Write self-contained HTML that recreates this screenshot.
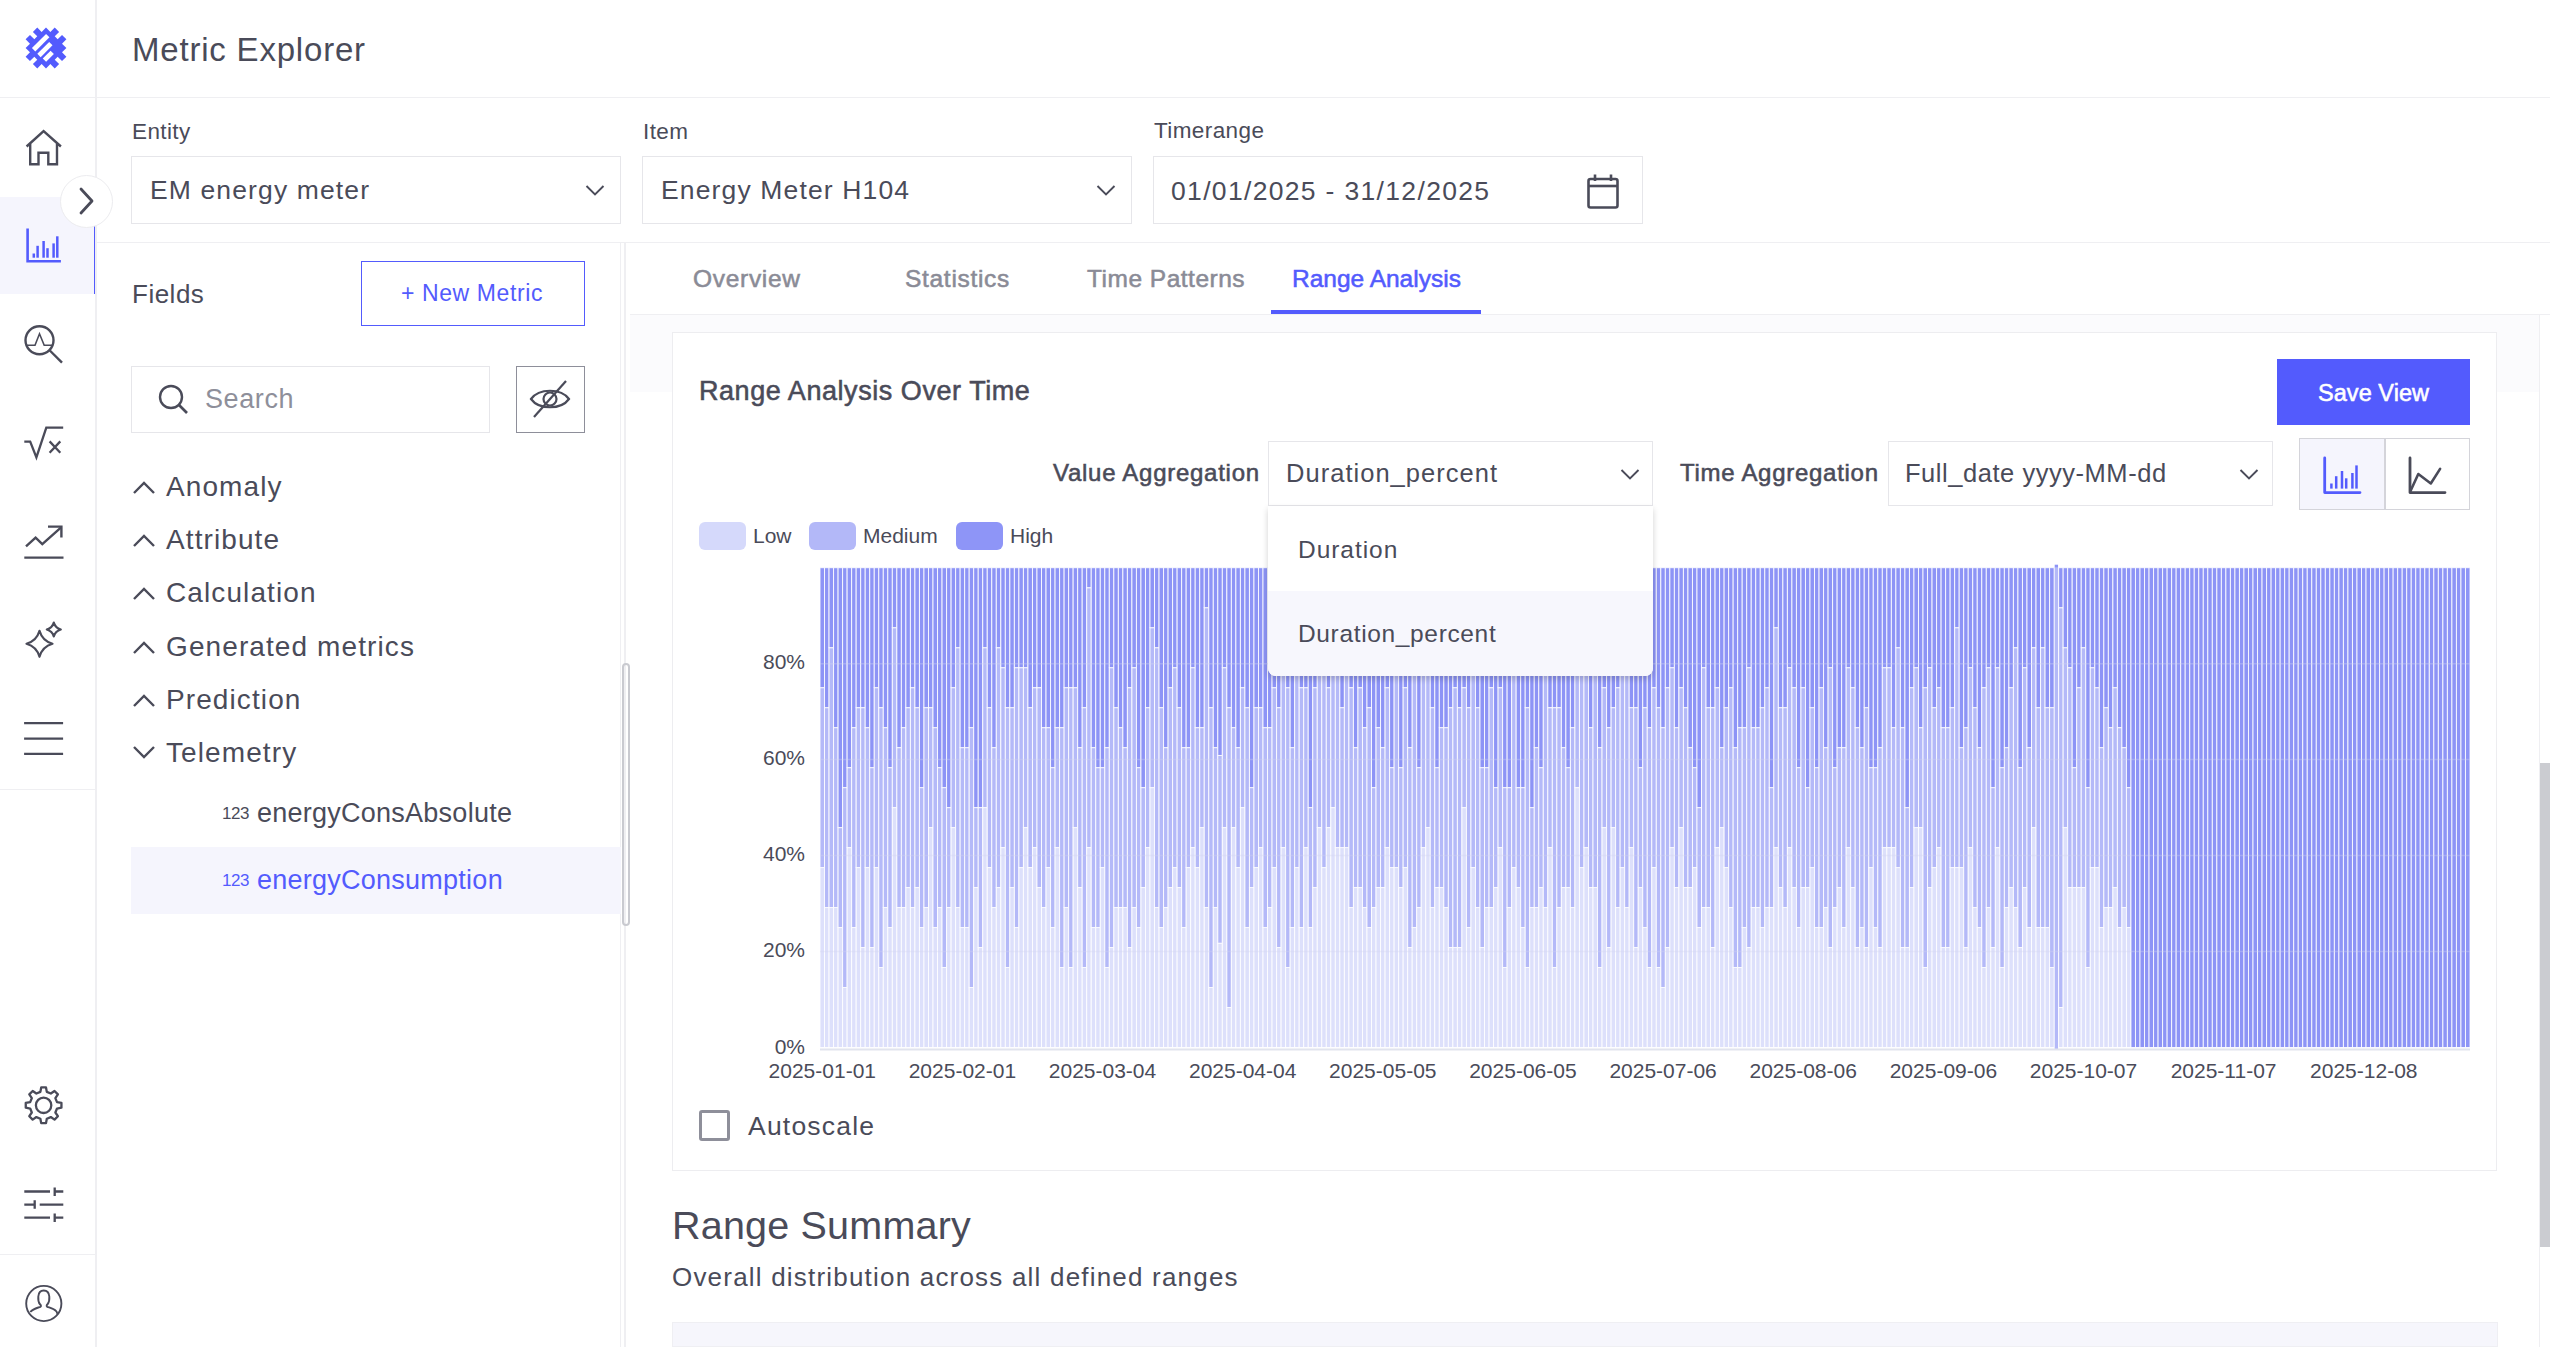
<!DOCTYPE html>
<html><head><meta charset="utf-8">
<style>
*{box-sizing:border-box;margin:0;padding:0}
html,body{width:2550px;height:1347px;overflow:hidden;background:#fff;font-family:"Liberation Sans",sans-serif;color:#4a4b59}
.a{position:absolute}
.t{position:absolute;white-space:nowrap;line-height:1}
.sb{-webkit-text-stroke:0.55px currentColor}
.ln{position:absolute;background:#efeff2}
.box{position:absolute;border:1.5px solid #e6e6ea;background:#fff}
svg{position:absolute;overflow:visible}
</style></head><body>
<!-- NAV -->
<div class="ln" style="left:95px;top:0;width:1.5px;height:1347px"></div>
<div class="ln" style="left:0;top:96.5px;width:2550px;height:1.5px"></div>
<div class="ln" style="left:0;top:788.5px;width:95px;height:1.5px"></div>
<div class="ln" style="left:0;top:1253.5px;width:95px;height:1.5px"></div>
<div class="a" style="left:0;top:197px;width:95px;height:97px;background:#f5f5fd"></div>
<div class="a" style="left:93.5px;top:197px;width:1.6px;height:97px;background:#535bfd"></div>
<svg style="left:0px;top:0px" width="95" height="97" viewBox="0 0 95 97"><g transform="translate(46 48) rotate(45) scale(1.03)"><path fill="#535bfd" d="M-8 -20 H-2 V-14 H2 V-20 H8 V-14 H14 V-8 H20 V-2 H14 V2 H20 V8 H14 V14 H8 V20 H2 V14 H-2 V20 H-8 V14 H-14 V8 H-20 V2 H-14 V-2 H-20 V-8 H-14 V-14 H-8 Z"/><rect x="-9.6" y="-9.7" width="4.6" height="19.4" fill="#fff"/><rect x="-1.95" y="-6.3" width="4.6" height="16.3" fill="#fff"/><rect x="4.95" y="-1.3" width="4.6" height="10.7" fill="#fff"/></g></svg>
<svg style="left:0px;top:0px" width="95" height="300" viewBox="0 0 95 300"><path d="M26.6 146.5 L43.6 131 L60.9 146.5 M30.2 143 V164.3 H38.5 V152.8 H48.3 V164.3 H57 V143" fill="none" stroke="#4a4b59" stroke-width="2.4" stroke-linejoin="miter"/></svg>
<svg style="left:0px;top:0px" width="95" height="300" viewBox="0 0 95 300"><path d="M27.6 228.6 V261.3 H60.9" fill="none" stroke="#535bfd" stroke-width="2.6"/><line x1="33.8" y1="257.7" x2="33.8" y2="253.5" stroke="#535bfd" stroke-width="2.5"/><line x1="37.6" y1="257.7" x2="37.6" y2="245.8" stroke="#535bfd" stroke-width="2.5"/><line x1="43.6" y1="257.7" x2="43.6" y2="241" stroke="#535bfd" stroke-width="2.5"/><line x1="47.5" y1="257.7" x2="47.5" y2="248.2" stroke="#535bfd" stroke-width="2.5"/><line x1="53.6" y1="257.7" x2="53.6" y2="243.4" stroke="#535bfd" stroke-width="2.5"/><line x1="57.3" y1="257.7" x2="57.3" y2="236.3" stroke="#535bfd" stroke-width="2.5"/></svg>
<svg style="left:0px;top:300px" width="95" height="100" viewBox="0 300 95 100"><circle cx="39.5" cy="340.3" r="14" fill="none" stroke="#4a4b59" stroke-width="2.4"/><line x1="49.8" y1="350.5" x2="62" y2="362.7" stroke="#4a4b59" stroke-width="2.4"/><path d="M26.5 345.3 H35 L39.5 333.8 L44.2 345.3 H52.5" fill="none" stroke="#4a4b59" stroke-width="1.6"/></svg>
<svg style="left:0px;top:400px" width="95" height="100" viewBox="0 400 95 100"><path d="M24.3 441.6 H30.2 L36.4 457.4 L46.3 427.7 H63.2" fill="none" stroke="#4a4b59" stroke-width="2.3"/><path d="M49.6 441.4 L60.3 452.7 M60.3 441.4 L49.6 452.7" stroke="#4a4b59" stroke-width="2.3"/></svg>
<svg style="left:0px;top:500px" width="95" height="100" viewBox="0 500 95 100"><path d="M26 546.3 L35.6 537.6 L42.3 544.1 L61.4 527.2" fill="none" stroke="#4a4b59" stroke-width="2.4"/><path d="M48 526.6 H61.4 V537.6" fill="none" stroke="#4a4b59" stroke-width="2.4"/><line x1="24.3" y1="557.6" x2="63.5" y2="557.6" stroke="#4a4b59" stroke-width="2.4"/></svg>
<svg style="left:0px;top:600px" width="95" height="100" viewBox="0 600 95 100"><path d="M39.5 630.8 Q42.36 640.9399999999999 52.5 643.8 Q42.36 646.66 39.5 656.8 Q36.64 646.66 26.5 643.8 Q36.64 640.9399999999999 39.5 630.8 Z M53.8 622.5 Q55.339999999999996 627.96 60.8 629.5 Q55.339999999999996 631.04 53.8 636.5 Q52.26 631.04 46.8 629.5 Q52.26 627.96 53.8 622.5 Z" fill="none" stroke="#4a4b59" stroke-width="2.2" stroke-linejoin="round"/></svg>
<svg style="left:0px;top:700px" width="95" height="80" viewBox="0 700 95 80"><line x1="24.1" y1="723.2" x2="63.1" y2="723.2" stroke="#4a4b59" stroke-width="2.3"/><line x1="24.1" y1="738.7" x2="63.1" y2="738.7" stroke="#4a4b59" stroke-width="2.3"/><line x1="24.1" y1="753.9" x2="63.1" y2="753.9" stroke="#4a4b59" stroke-width="2.3"/></svg>
<svg style="left:0px;top:1075px" width="95" height="60" viewBox="0 1075 95 60"><path d="M41.20 1087.46 L46.00 1087.46 L46.82 1091.88 L50.81 1093.53 L54.52 1090.99 L57.91 1094.38 L55.37 1098.09 L57.02 1102.08 L61.44 1102.90 L61.44 1107.70 L57.02 1108.52 L55.37 1112.51 L57.91 1116.22 L54.52 1119.61 L50.81 1117.07 L46.82 1118.72 L46.00 1123.14 L41.20 1123.14 L40.38 1118.72 L36.39 1117.07 L32.68 1119.61 L29.29 1116.22 L31.83 1112.51 L30.18 1108.52 L25.76 1107.70 L25.76 1102.90 L30.18 1102.08 L31.83 1098.09 L29.29 1094.38 L32.68 1090.99 L36.39 1093.53 L40.38 1091.88 Z" fill="none" stroke="#4a4b59" stroke-width="2.3" stroke-linejoin="round"/><circle cx="43.6" cy="1105.3" r="7.7" fill="none" stroke="#4a4b59" stroke-width="2.3"/></svg>
<svg style="left:0px;top:1180px" width="95" height="50" viewBox="0 1180 95 50"><path d="M24.3 1191.5 H50 M54.7 1191.5 H63.3 M54.7 1187.4 V1195.9 M24.3 1204.6 H34.7 M39.7 1204.6 H63.3 M34.7 1200.3 V1208.8 M24.3 1217.7 H50 M54.7 1217.7 H63.3 M54.7 1213.4 V1221.9" fill="none" stroke="#4a4b59" stroke-width="2.3"/></svg>
<svg style="left:0px;top:1270px" width="95" height="70" viewBox="0 1270 95 70"><circle cx="43.8" cy="1303.5" r="17.6" fill="none" stroke="#4a4b59" stroke-width="1.9"/><path d="M30.3 1312 C33 1308.5 37 1308 40.5 1306.8 C41.5 1306 40.8 1305 40 1304.3 C38.5 1302.5 38 1300 38.3 1296.5 C38.6 1292.5 41 1290.5 43.7 1290.5 C46.5 1290.5 49 1292.5 49.3 1296.5 C49.6 1300 49 1302.5 47.5 1304.3 C46.7 1305 46.2 1306 47.2 1306.8 C50.7 1308 54 1308.5 56.5 1311.5 L57.5 1314" fill="none" stroke="#4a4b59" stroke-width="1.9"/></svg>
<!-- HEADER -->
<div class="t" style="left:132px;top:33px;font-size:33px;letter-spacing:0.8px">Metric Explorer</div>
<!-- FILTER ROW -->
<div class="ln" style="left:96px;top:241.5px;width:2454px;height:1.5px"></div>
<div class="t" style="left:132px;top:121px;font-size:22.5px;letter-spacing:0.4px">Entity</div>
<div class="t" style="left:643px;top:121px;font-size:22.5px;letter-spacing:0.4px">Item</div>
<div class="t" style="left:1154px;top:120px;font-size:22.5px;letter-spacing:0.4px">Timerange</div>
<div class="box" style="left:131px;top:156px;width:490px;height:68px"></div>
<div class="box" style="left:642px;top:156px;width:490px;height:68px"></div>
<div class="box" style="left:1153px;top:156px;width:490px;height:68px"></div>
<div class="t" style="left:150px;top:177px;font-size:26.5px;letter-spacing:1.13px">EM energy meter</div>
<div class="t" style="left:661px;top:177px;font-size:26.5px;letter-spacing:1.14px">Energy Meter H104</div>
<div class="t" style="left:1171px;top:178px;font-size:26.5px;letter-spacing:1.33px">01/01/2025 - 31/12/2025</div>
<svg style="left:584px;top:183px" width="22" height="16" viewBox="0 0 22 16"><path d="M2.5 3 L11 11.5 L19.5 3" fill="none" stroke="#4a4b59" stroke-width="1.9"/></svg>
<svg style="left:1095px;top:183px" width="22" height="16" viewBox="0 0 22 16"><path d="M2.5 3 L11 11.5 L19.5 3" fill="none" stroke="#4a4b59" stroke-width="1.9"/></svg>
<svg style="left:1585px;top:173px" width="36" height="38" viewBox="0 0 36 38"><rect x="3.5" y="6" width="29" height="28.5" rx="2" fill="none" stroke="#4a4b59" stroke-width="2.6"/><line x1="3.5" y1="13" x2="32.5" y2="13" stroke="#4a4b59" stroke-width="2.6"/><line x1="10" y1="1.5" x2="10" y2="8" stroke="#4a4b59" stroke-width="2.6"/><line x1="26" y1="1.5" x2="26" y2="8" stroke="#4a4b59" stroke-width="2.6"/></svg>
<!-- LEFT PANEL -->
<div class="ln" style="left:619.8px;top:243px;width:1.5px;height:1104px"></div>
<div class="ln" style="left:624.3px;top:243px;width:1.5px;height:1104px"></div>
<div class="t" style="left:132px;top:281px;font-size:26px;letter-spacing:0.5px">Fields</div>
<div class="a" style="left:361px;top:261px;width:224px;height:65px;border:1.5px solid #535bfd"></div>
<div class="t" style="left:401px;top:282px;font-size:23px;letter-spacing:0.6px;color:#535bfd">+ New Metric</div>
<div class="box" style="left:131px;top:366px;width:359px;height:67px"></div>
<svg style="left:156px;top:382px" width="34" height="34" viewBox="0 0 34 34"><circle cx="15" cy="15" r="11" fill="none" stroke="#4a4b59" stroke-width="2.4"/><line x1="23" y1="23" x2="31" y2="31" stroke="#4a4b59" stroke-width="2.6"/></svg>
<div class="t" style="left:205px;top:386px;font-size:27px;letter-spacing:0.6px;color:#8e8f9a">Search</div>
<div class="a" style="left:516px;top:366px;width:69px;height:67px;border:1.5px solid #8e8f9a"></div>
<svg style="left:526px;top:376px" width="48" height="46" viewBox="0 0 48 46"><path d="M5 23 C13 12 35 12 43 23 C35 34 13 34 5 23 Z" fill="none" stroke="#4a4b59" stroke-width="2.2"/><circle cx="24" cy="23" r="6.5" fill="none" stroke="#4a4b59" stroke-width="2.2"/><line x1="8" y1="41" x2="40" y2="5" stroke="#4a4b59" stroke-width="2.2"/></svg>
<div class="a" style="left:131px;top:847px;width:490px;height:67px;background:#f5f5fd"></div>
<svg style="left:0;top:0" width="200" height="1000" viewBox="0 0 200 1000"><path d="M134 493 L144 483 L154 493" fill="none" stroke="#4a4b59" stroke-width="2.4"/></svg>
<div class="t" style="left:166px;top:473px;font-size:28px;letter-spacing:1.1px">Anomaly</div>
<svg style="left:0;top:0" width="200" height="1000" viewBox="0 0 200 1000"><path d="M134 546 L144 536 L154 546" fill="none" stroke="#4a4b59" stroke-width="2.4"/></svg>
<div class="t" style="left:166px;top:526px;font-size:28px;letter-spacing:1.1px">Attribute</div>
<svg style="left:0;top:0" width="200" height="1000" viewBox="0 0 200 1000"><path d="M134 599 L144 589 L154 599" fill="none" stroke="#4a4b59" stroke-width="2.4"/></svg>
<div class="t" style="left:166px;top:579px;font-size:28px;letter-spacing:1.1px">Calculation</div>
<svg style="left:0;top:0" width="200" height="1000" viewBox="0 0 200 1000"><path d="M134 653 L144 643 L154 653" fill="none" stroke="#4a4b59" stroke-width="2.4"/></svg>
<div class="t" style="left:166px;top:633px;font-size:28px;letter-spacing:1.1px">Generated metrics</div>
<svg style="left:0;top:0" width="200" height="1000" viewBox="0 0 200 1000"><path d="M134 706 L144 696 L154 706" fill="none" stroke="#4a4b59" stroke-width="2.4"/></svg>
<div class="t" style="left:166px;top:686px;font-size:28px;letter-spacing:1.1px">Prediction</div>
<svg style="left:0;top:0" width="200" height="1000" viewBox="0 0 200 1000"><path d="M134 747 L144 757 L154 747" fill="none" stroke="#4a4b59" stroke-width="2.4"/></svg>
<div class="t" style="left:166px;top:739px;font-size:28px;letter-spacing:1.1px">Telemetry</div>
<div class="t" style="left:222px;top:805px;font-size:17px;letter-spacing:-0.5px;color:#4a4b59">123</div>
<div class="t" style="left:257px;top:800px;font-size:27px;letter-spacing:0.25px;color:#4a4b59">energyConsAbsolute</div>
<div class="t" style="left:222px;top:872px;font-size:17px;letter-spacing:-0.5px;color:#535bfd">123</div>
<div class="t" style="left:257px;top:867px;font-size:27px;letter-spacing:0.25px;color:#535bfd">energyConsumption</div>
<!-- MAIN -->
<div class="ln" style="left:630px;top:313.5px;width:1920px;height:1.5px"></div>
<div class="a" style="left:630px;top:315px;width:1909px;height:77px;background:#fbfbfd"></div>
<div class="a" style="left:621.5px;top:663px;width:8px;height:263px;border:2px solid #c9cad0;border-radius:4px"></div>
<div class="ln" style="left:2538.5px;top:315px;width:1.5px;height:1032px"></div>
<div class="a" style="left:2540px;top:763px;width:10px;height:484px;background:#cbccd1"></div>
<div class="t sb" style="left:693px;top:267px;font-size:24.5px;letter-spacing:0.7px;color:#8a8b96">Overview</div>
<div class="t sb" style="left:905px;top:267px;font-size:24.5px;letter-spacing:0.7px;color:#8a8b96">Statistics</div>
<div class="t sb" style="left:1087px;top:267px;font-size:24.5px;letter-spacing:0.5px;color:#8a8b96">Time Patterns</div>
<div class="t sb" style="left:1292px;top:267px;font-size:24.5px;letter-spacing:0px;color:#535bfd">Range Analysis</div>
<div class="a" style="left:1271px;top:310px;width:210px;height:4px;background:#535bfd"></div>
<!-- CARD -->
<div class="a" style="left:672px;top:332px;width:1825px;height:839px;background:#fff;border:1.5px solid #ededf0"></div>
<div class="t sb" style="left:699px;top:378px;font-size:27px;letter-spacing:0.55px">Range Analysis Over Time</div>
<div class="a" style="left:2277px;top:359px;width:193px;height:66px;background:#535bfd"></div>
<div class="t sb" style="left:2318px;top:382px;font-size:23.5px;letter-spacing:0.05px;color:#fff">Save View</div>
<div class="t sb" style="left:1053px;top:461px;font-size:24px;letter-spacing:0.73px">Value Aggregation</div>
<div class="box" style="left:1268px;top:441px;width:385px;height:65px"></div>
<div class="t" style="left:1286px;top:461px;font-size:25.5px;letter-spacing:1.03px">Duration_percent</div>
<svg style="left:1619px;top:467px" width="22" height="16" viewBox="0 0 22 16"><path d="M2.5 3 L11 11.5 L19.5 3" fill="none" stroke="#4a4b59" stroke-width="1.9"/></svg>
<div class="t sb" style="left:1680px;top:461px;font-size:24px;letter-spacing:0.72px">Time Aggregation</div>
<div class="box" style="left:1888px;top:441px;width:385px;height:65px"></div>
<div class="t" style="left:1905px;top:461px;font-size:25.5px;letter-spacing:0.54px">Full_date yyyy-MM-dd</div>
<svg style="left:2238px;top:467px" width="22" height="16" viewBox="0 0 22 16"><path d="M2.5 3 L11 11.5 L19.5 3" fill="none" stroke="#4a4b59" stroke-width="1.9"/></svg>
<div class="a" style="left:2299px;top:438px;width:171px;height:72px;border:1.5px solid #d4d4da"></div>
<div class="a" style="left:2300px;top:439px;width:84px;height:70px;background:#f5f5fd"></div>
<div class="ln" style="left:2384px;top:439px;width:1.5px;height:70px;background:#d4d4da"></div>
<svg style="left:0;top:0" width="2550" height="600" viewBox="0 0 2550 600"><path d="M2324.7 458 V492.6 H2360" fill="none" stroke="#535bfd" stroke-width="2.8" stroke-linecap="round" stroke-linejoin="round"/><line x1="2331.4" y1="488.6" x2="2331.4" y2="483.5" stroke="#535bfd" stroke-width="2.5"/><line x1="2336.2" y1="488.6" x2="2336.2" y2="476.2" stroke="#535bfd" stroke-width="2.5"/><line x1="2342" y1="488.6" x2="2342" y2="471" stroke="#535bfd" stroke-width="2.5"/><line x1="2346.2" y1="488.6" x2="2346.2" y2="478.3" stroke="#535bfd" stroke-width="2.5"/><line x1="2352.4" y1="488.6" x2="2352.4" y2="473" stroke="#535bfd" stroke-width="2.5"/><line x1="2356.5" y1="488.6" x2="2356.5" y2="465.4" stroke="#535bfd" stroke-width="2.5"/></svg>
<svg style="left:0;top:0" width="2550" height="600" viewBox="0 0 2550 600"><path d="M2410 458 V492.6 H2445" fill="none" stroke="#4a4b59" stroke-width="2.8" stroke-linecap="round" stroke-linejoin="round"/><path d="M2410.5 491 L2418.3 474 L2430.8 483.5 L2440.1 468.9" fill="none" stroke="#4a4b59" stroke-width="2.6" stroke-linecap="round" stroke-linejoin="round"/></svg>
<!-- LEGEND -->
<div class="a" style="left:699px;top:522px;width:47px;height:28px;border-radius:6px;background:#d5d9fb"></div>
<div class="t" style="left:753px;top:525px;font-size:21px;color:#4a4b59">Low</div>
<div class="a" style="left:809px;top:522px;width:47px;height:28px;border-radius:6px;background:#b3b8f8"></div>
<div class="t" style="left:863px;top:525px;font-size:21px;color:#4a4b59">Medium</div>
<div class="a" style="left:956px;top:522px;width:47px;height:28px;border-radius:6px;background:#8e95f7"></div>
<div class="t" style="left:1010px;top:525px;font-size:21px;color:#4a4b59">High</div>
<svg style="left:0;top:0" width="2550" height="1347" viewBox="0 0 2550 1347" font-family="Liberation Sans"><text x="805" y="1053.5" text-anchor="end" font-size="21" fill="#4a4b59">0%</text><text x="805" y="957.3" text-anchor="end" font-size="21" fill="#4a4b59">20%</text><text x="805" y="861.1" text-anchor="end" font-size="21" fill="#4a4b59">40%</text><text x="805" y="764.9" text-anchor="end" font-size="21" fill="#4a4b59">60%</text><text x="805" y="668.7" text-anchor="end" font-size="21" fill="#4a4b59">80%</text><g stroke="#fff" stroke-width="1" stroke-opacity="0.85"><rect x="820.00" y="867.58" width="4.52" height="179.92" fill="#dde0fb"/><rect x="820.00" y="687.65" width="4.52" height="179.92" fill="#b4b9f8"/><rect x="820.00" y="567.70" width="4.52" height="119.95" fill="#8d94f6"/><rect x="824.52" y="907.56" width="4.52" height="139.94" fill="#dde0fb"/><rect x="824.52" y="707.64" width="4.52" height="199.92" fill="#b4b9f8"/><rect x="824.52" y="567.70" width="4.52" height="139.94" fill="#8d94f6"/><rect x="829.04" y="907.56" width="4.52" height="139.94" fill="#dde0fb"/><rect x="829.04" y="647.67" width="4.52" height="259.89" fill="#b4b9f8"/><rect x="829.04" y="567.70" width="4.52" height="79.97" fill="#8d94f6"/><rect x="833.56" y="907.56" width="4.52" height="139.94" fill="#dde0fb"/><rect x="833.56" y="727.63" width="4.52" height="179.92" fill="#b4b9f8"/><rect x="833.56" y="567.70" width="4.52" height="159.93" fill="#8d94f6"/><rect x="838.08" y="927.55" width="4.52" height="119.95" fill="#dde0fb"/><rect x="838.08" y="827.59" width="4.52" height="99.96" fill="#b4b9f8"/><rect x="838.08" y="567.70" width="4.52" height="259.89" fill="#8d94f6"/><rect x="842.60" y="987.52" width="4.52" height="59.98" fill="#dde0fb"/><rect x="842.60" y="787.61" width="4.52" height="199.92" fill="#b4b9f8"/><rect x="842.60" y="567.70" width="4.52" height="219.91" fill="#8d94f6"/><rect x="847.12" y="847.58" width="4.52" height="199.92" fill="#dde0fb"/><rect x="847.12" y="767.62" width="4.52" height="79.97" fill="#b4b9f8"/><rect x="847.12" y="567.70" width="4.52" height="199.92" fill="#8d94f6"/><rect x="851.64" y="927.55" width="4.52" height="119.95" fill="#dde0fb"/><rect x="851.64" y="727.63" width="4.52" height="199.92" fill="#b4b9f8"/><rect x="851.64" y="567.70" width="4.52" height="159.93" fill="#8d94f6"/><rect x="856.16" y="867.58" width="4.52" height="179.92" fill="#dde0fb"/><rect x="856.16" y="707.64" width="4.52" height="159.93" fill="#b4b9f8"/><rect x="856.16" y="567.70" width="4.52" height="139.94" fill="#8d94f6"/><rect x="860.68" y="947.54" width="4.52" height="99.96" fill="#dde0fb"/><rect x="860.68" y="707.64" width="4.52" height="239.90" fill="#b4b9f8"/><rect x="860.68" y="567.70" width="4.52" height="139.94" fill="#8d94f6"/><rect x="865.21" y="867.58" width="4.52" height="179.92" fill="#dde0fb"/><rect x="865.21" y="727.63" width="4.52" height="139.94" fill="#b4b9f8"/><rect x="865.21" y="567.70" width="4.52" height="159.93" fill="#8d94f6"/><rect x="869.73" y="947.54" width="4.52" height="99.96" fill="#dde0fb"/><rect x="869.73" y="767.62" width="4.52" height="179.92" fill="#b4b9f8"/><rect x="869.73" y="567.70" width="4.52" height="199.92" fill="#8d94f6"/><rect x="874.25" y="867.58" width="4.52" height="179.92" fill="#dde0fb"/><rect x="874.25" y="687.65" width="4.52" height="179.92" fill="#b4b9f8"/><rect x="874.25" y="567.70" width="4.52" height="119.95" fill="#8d94f6"/><rect x="878.77" y="967.53" width="4.52" height="79.97" fill="#dde0fb"/><rect x="878.77" y="707.64" width="4.52" height="259.89" fill="#b4b9f8"/><rect x="878.77" y="567.70" width="4.52" height="139.94" fill="#8d94f6"/><rect x="883.29" y="907.56" width="4.52" height="139.94" fill="#dde0fb"/><rect x="883.29" y="727.63" width="4.52" height="179.92" fill="#b4b9f8"/><rect x="883.29" y="567.70" width="4.52" height="159.93" fill="#8d94f6"/><rect x="887.81" y="927.55" width="4.52" height="119.95" fill="#dde0fb"/><rect x="887.81" y="767.62" width="4.52" height="159.93" fill="#b4b9f8"/><rect x="887.81" y="567.70" width="4.52" height="199.92" fill="#8d94f6"/><rect x="892.33" y="807.60" width="4.52" height="239.90" fill="#dde0fb"/><rect x="892.33" y="627.67" width="4.52" height="179.93" fill="#b4b9f8"/><rect x="892.33" y="567.70" width="4.52" height="59.97" fill="#8d94f6"/><rect x="896.85" y="907.56" width="4.52" height="139.94" fill="#dde0fb"/><rect x="896.85" y="747.62" width="4.52" height="159.93" fill="#b4b9f8"/><rect x="896.85" y="567.70" width="4.52" height="179.92" fill="#8d94f6"/><rect x="901.37" y="907.56" width="4.52" height="139.94" fill="#dde0fb"/><rect x="901.37" y="727.63" width="4.52" height="179.92" fill="#b4b9f8"/><rect x="901.37" y="567.70" width="4.52" height="159.93" fill="#8d94f6"/><rect x="905.89" y="887.57" width="4.52" height="159.93" fill="#dde0fb"/><rect x="905.89" y="707.64" width="4.52" height="179.93" fill="#b4b9f8"/><rect x="905.89" y="567.70" width="4.52" height="139.94" fill="#8d94f6"/><rect x="910.41" y="907.56" width="4.52" height="139.94" fill="#dde0fb"/><rect x="910.41" y="687.65" width="4.52" height="219.91" fill="#b4b9f8"/><rect x="910.41" y="567.70" width="4.52" height="119.95" fill="#8d94f6"/><rect x="914.93" y="887.57" width="4.52" height="159.93" fill="#dde0fb"/><rect x="914.93" y="707.64" width="4.52" height="179.93" fill="#b4b9f8"/><rect x="914.93" y="567.70" width="4.52" height="139.94" fill="#8d94f6"/><rect x="919.45" y="927.55" width="4.52" height="119.95" fill="#dde0fb"/><rect x="919.45" y="787.61" width="4.52" height="139.94" fill="#b4b9f8"/><rect x="919.45" y="567.70" width="4.52" height="219.91" fill="#8d94f6"/><rect x="923.97" y="907.56" width="4.52" height="139.94" fill="#dde0fb"/><rect x="923.97" y="707.64" width="4.52" height="199.92" fill="#b4b9f8"/><rect x="923.97" y="567.70" width="4.52" height="139.94" fill="#8d94f6"/><rect x="928.49" y="827.59" width="4.52" height="219.91" fill="#dde0fb"/><rect x="928.49" y="707.64" width="4.52" height="119.95" fill="#b4b9f8"/><rect x="928.49" y="567.70" width="4.52" height="139.94" fill="#8d94f6"/><rect x="933.01" y="927.55" width="4.52" height="119.95" fill="#dde0fb"/><rect x="933.01" y="727.63" width="4.52" height="199.92" fill="#b4b9f8"/><rect x="933.01" y="567.70" width="4.52" height="159.93" fill="#8d94f6"/><rect x="937.53" y="907.56" width="4.52" height="139.94" fill="#dde0fb"/><rect x="937.53" y="767.62" width="4.52" height="139.94" fill="#b4b9f8"/><rect x="937.53" y="567.70" width="4.52" height="199.92" fill="#8d94f6"/><rect x="942.05" y="967.53" width="4.52" height="79.97" fill="#dde0fb"/><rect x="942.05" y="787.61" width="4.52" height="179.92" fill="#b4b9f8"/><rect x="942.05" y="567.70" width="4.52" height="219.91" fill="#8d94f6"/><rect x="946.58" y="907.56" width="4.52" height="139.94" fill="#dde0fb"/><rect x="946.58" y="807.60" width="4.52" height="99.96" fill="#b4b9f8"/><rect x="946.58" y="567.70" width="4.52" height="239.90" fill="#8d94f6"/><rect x="951.10" y="827.59" width="4.52" height="219.91" fill="#dde0fb"/><rect x="951.10" y="687.65" width="4.52" height="139.94" fill="#b4b9f8"/><rect x="951.10" y="567.70" width="4.52" height="119.95" fill="#8d94f6"/><rect x="955.62" y="907.56" width="4.52" height="139.94" fill="#dde0fb"/><rect x="955.62" y="647.67" width="4.52" height="259.89" fill="#b4b9f8"/><rect x="955.62" y="567.70" width="4.52" height="79.97" fill="#8d94f6"/><rect x="960.14" y="927.55" width="4.52" height="119.95" fill="#dde0fb"/><rect x="960.14" y="747.62" width="4.52" height="179.92" fill="#b4b9f8"/><rect x="960.14" y="567.70" width="4.52" height="179.92" fill="#8d94f6"/><rect x="964.66" y="927.55" width="4.52" height="119.95" fill="#dde0fb"/><rect x="964.66" y="747.62" width="4.52" height="179.92" fill="#b4b9f8"/><rect x="964.66" y="567.70" width="4.52" height="179.92" fill="#8d94f6"/><rect x="969.18" y="987.52" width="4.52" height="59.98" fill="#dde0fb"/><rect x="969.18" y="727.63" width="4.52" height="259.89" fill="#b4b9f8"/><rect x="969.18" y="567.70" width="4.52" height="159.93" fill="#8d94f6"/><rect x="973.70" y="887.57" width="4.52" height="159.93" fill="#dde0fb"/><rect x="973.70" y="807.60" width="4.52" height="79.97" fill="#b4b9f8"/><rect x="973.70" y="567.70" width="4.52" height="239.90" fill="#8d94f6"/><rect x="978.22" y="947.54" width="4.52" height="99.96" fill="#dde0fb"/><rect x="978.22" y="807.60" width="4.52" height="139.94" fill="#b4b9f8"/><rect x="978.22" y="567.70" width="4.52" height="239.90" fill="#8d94f6"/><rect x="982.74" y="807.60" width="4.52" height="239.90" fill="#dde0fb"/><rect x="982.74" y="647.67" width="4.52" height="159.93" fill="#b4b9f8"/><rect x="982.74" y="567.70" width="4.52" height="79.97" fill="#8d94f6"/><rect x="987.26" y="867.58" width="4.52" height="179.92" fill="#dde0fb"/><rect x="987.26" y="707.64" width="4.52" height="159.93" fill="#b4b9f8"/><rect x="987.26" y="567.70" width="4.52" height="139.94" fill="#8d94f6"/><rect x="991.78" y="907.56" width="4.52" height="139.94" fill="#dde0fb"/><rect x="991.78" y="747.62" width="4.52" height="159.93" fill="#b4b9f8"/><rect x="991.78" y="567.70" width="4.52" height="179.92" fill="#8d94f6"/><rect x="996.30" y="887.57" width="4.52" height="159.93" fill="#dde0fb"/><rect x="996.30" y="647.67" width="4.52" height="239.90" fill="#b4b9f8"/><rect x="996.30" y="567.70" width="4.52" height="79.97" fill="#8d94f6"/><rect x="1000.82" y="847.58" width="4.52" height="199.92" fill="#dde0fb"/><rect x="1000.82" y="667.66" width="4.52" height="179.93" fill="#b4b9f8"/><rect x="1000.82" y="567.70" width="4.52" height="99.96" fill="#8d94f6"/><rect x="1005.34" y="967.53" width="4.52" height="79.97" fill="#dde0fb"/><rect x="1005.34" y="707.64" width="4.52" height="259.89" fill="#b4b9f8"/><rect x="1005.34" y="567.70" width="4.52" height="139.94" fill="#8d94f6"/><rect x="1009.86" y="887.57" width="4.52" height="159.93" fill="#dde0fb"/><rect x="1009.86" y="707.64" width="4.52" height="179.93" fill="#b4b9f8"/><rect x="1009.86" y="567.70" width="4.52" height="139.94" fill="#8d94f6"/><rect x="1014.38" y="927.55" width="4.52" height="119.95" fill="#dde0fb"/><rect x="1014.38" y="667.66" width="4.52" height="259.89" fill="#b4b9f8"/><rect x="1014.38" y="567.70" width="4.52" height="99.96" fill="#8d94f6"/><rect x="1018.90" y="867.58" width="4.52" height="179.92" fill="#dde0fb"/><rect x="1018.90" y="667.66" width="4.52" height="199.92" fill="#b4b9f8"/><rect x="1018.90" y="567.70" width="4.52" height="99.96" fill="#8d94f6"/><rect x="1023.42" y="827.59" width="4.52" height="219.91" fill="#dde0fb"/><rect x="1023.42" y="667.66" width="4.52" height="159.93" fill="#b4b9f8"/><rect x="1023.42" y="567.70" width="4.52" height="99.96" fill="#8d94f6"/><rect x="1027.95" y="867.58" width="4.52" height="179.92" fill="#dde0fb"/><rect x="1027.95" y="707.64" width="4.52" height="159.93" fill="#b4b9f8"/><rect x="1027.95" y="567.70" width="4.52" height="139.94" fill="#8d94f6"/><rect x="1032.47" y="847.58" width="4.52" height="199.92" fill="#dde0fb"/><rect x="1032.47" y="687.65" width="4.52" height="159.93" fill="#b4b9f8"/><rect x="1032.47" y="567.70" width="4.52" height="119.95" fill="#8d94f6"/><rect x="1036.99" y="887.57" width="4.52" height="159.93" fill="#dde0fb"/><rect x="1036.99" y="687.65" width="4.52" height="199.92" fill="#b4b9f8"/><rect x="1036.99" y="567.70" width="4.52" height="119.95" fill="#8d94f6"/><rect x="1041.51" y="907.56" width="4.52" height="139.94" fill="#dde0fb"/><rect x="1041.51" y="727.63" width="4.52" height="179.92" fill="#b4b9f8"/><rect x="1041.51" y="567.70" width="4.52" height="159.93" fill="#8d94f6"/><rect x="1046.03" y="867.58" width="4.52" height="179.92" fill="#dde0fb"/><rect x="1046.03" y="727.63" width="4.52" height="139.94" fill="#b4b9f8"/><rect x="1046.03" y="567.70" width="4.52" height="159.93" fill="#8d94f6"/><rect x="1050.55" y="927.55" width="4.52" height="119.95" fill="#dde0fb"/><rect x="1050.55" y="767.62" width="4.52" height="159.93" fill="#b4b9f8"/><rect x="1050.55" y="567.70" width="4.52" height="199.92" fill="#8d94f6"/><rect x="1055.07" y="847.58" width="4.52" height="199.92" fill="#dde0fb"/><rect x="1055.07" y="727.63" width="4.52" height="119.95" fill="#b4b9f8"/><rect x="1055.07" y="567.70" width="4.52" height="159.93" fill="#8d94f6"/><rect x="1059.59" y="967.53" width="4.52" height="79.97" fill="#dde0fb"/><rect x="1059.59" y="727.63" width="4.52" height="239.90" fill="#b4b9f8"/><rect x="1059.59" y="567.70" width="4.52" height="159.93" fill="#8d94f6"/><rect x="1064.11" y="907.56" width="4.52" height="139.94" fill="#dde0fb"/><rect x="1064.11" y="687.65" width="4.52" height="219.91" fill="#b4b9f8"/><rect x="1064.11" y="567.70" width="4.52" height="119.95" fill="#8d94f6"/><rect x="1068.63" y="967.53" width="4.52" height="79.97" fill="#dde0fb"/><rect x="1068.63" y="687.65" width="4.52" height="279.88" fill="#b4b9f8"/><rect x="1068.63" y="567.70" width="4.52" height="119.95" fill="#8d94f6"/><rect x="1073.15" y="827.59" width="4.52" height="219.91" fill="#dde0fb"/><rect x="1073.15" y="687.65" width="4.52" height="139.94" fill="#b4b9f8"/><rect x="1073.15" y="567.70" width="4.52" height="119.95" fill="#8d94f6"/><rect x="1077.67" y="887.57" width="4.52" height="159.93" fill="#dde0fb"/><rect x="1077.67" y="747.62" width="4.52" height="139.94" fill="#b4b9f8"/><rect x="1077.67" y="567.70" width="4.52" height="179.92" fill="#8d94f6"/><rect x="1082.19" y="967.53" width="4.52" height="79.97" fill="#dde0fb"/><rect x="1082.19" y="707.64" width="4.52" height="259.89" fill="#b4b9f8"/><rect x="1082.19" y="567.70" width="4.52" height="139.94" fill="#8d94f6"/><rect x="1086.71" y="847.58" width="4.52" height="199.92" fill="#dde0fb"/><rect x="1086.71" y="587.69" width="4.52" height="259.89" fill="#b4b9f8"/><rect x="1086.71" y="567.70" width="4.52" height="19.99" fill="#8d94f6"/><rect x="1091.23" y="927.55" width="4.52" height="119.95" fill="#dde0fb"/><rect x="1091.23" y="747.62" width="4.52" height="179.92" fill="#b4b9f8"/><rect x="1091.23" y="567.70" width="4.52" height="179.92" fill="#8d94f6"/><rect x="1095.75" y="927.55" width="4.52" height="119.95" fill="#dde0fb"/><rect x="1095.75" y="767.62" width="4.52" height="159.93" fill="#b4b9f8"/><rect x="1095.75" y="567.70" width="4.52" height="199.92" fill="#8d94f6"/><rect x="1100.27" y="867.58" width="4.52" height="179.92" fill="#dde0fb"/><rect x="1100.27" y="767.62" width="4.52" height="99.96" fill="#b4b9f8"/><rect x="1100.27" y="567.70" width="4.52" height="199.92" fill="#8d94f6"/><rect x="1104.79" y="967.53" width="4.52" height="79.97" fill="#dde0fb"/><rect x="1104.79" y="747.62" width="4.52" height="219.91" fill="#b4b9f8"/><rect x="1104.79" y="567.70" width="4.52" height="179.92" fill="#8d94f6"/><rect x="1109.32" y="947.54" width="4.52" height="99.96" fill="#dde0fb"/><rect x="1109.32" y="667.66" width="4.52" height="279.88" fill="#b4b9f8"/><rect x="1109.32" y="567.70" width="4.52" height="99.96" fill="#8d94f6"/><rect x="1113.84" y="907.56" width="4.52" height="139.94" fill="#dde0fb"/><rect x="1113.84" y="707.64" width="4.52" height="199.92" fill="#b4b9f8"/><rect x="1113.84" y="567.70" width="4.52" height="139.94" fill="#8d94f6"/><rect x="1118.36" y="907.56" width="4.52" height="139.94" fill="#dde0fb"/><rect x="1118.36" y="727.63" width="4.52" height="179.92" fill="#b4b9f8"/><rect x="1118.36" y="567.70" width="4.52" height="159.93" fill="#8d94f6"/><rect x="1122.88" y="907.56" width="4.52" height="139.94" fill="#dde0fb"/><rect x="1122.88" y="747.62" width="4.52" height="159.93" fill="#b4b9f8"/><rect x="1122.88" y="567.70" width="4.52" height="179.92" fill="#8d94f6"/><rect x="1127.40" y="947.54" width="4.52" height="99.96" fill="#dde0fb"/><rect x="1127.40" y="687.65" width="4.52" height="259.89" fill="#b4b9f8"/><rect x="1127.40" y="567.70" width="4.52" height="119.95" fill="#8d94f6"/><rect x="1131.92" y="907.56" width="4.52" height="139.94" fill="#dde0fb"/><rect x="1131.92" y="667.66" width="4.52" height="239.90" fill="#b4b9f8"/><rect x="1131.92" y="567.70" width="4.52" height="99.96" fill="#8d94f6"/><rect x="1136.44" y="927.55" width="4.52" height="119.95" fill="#dde0fb"/><rect x="1136.44" y="767.62" width="4.52" height="159.93" fill="#b4b9f8"/><rect x="1136.44" y="567.70" width="4.52" height="199.92" fill="#8d94f6"/><rect x="1140.96" y="887.57" width="4.52" height="159.93" fill="#dde0fb"/><rect x="1140.96" y="787.61" width="4.52" height="99.96" fill="#b4b9f8"/><rect x="1140.96" y="567.70" width="4.52" height="219.91" fill="#8d94f6"/><rect x="1145.48" y="847.58" width="4.52" height="199.92" fill="#dde0fb"/><rect x="1145.48" y="707.64" width="4.52" height="139.94" fill="#b4b9f8"/><rect x="1145.48" y="567.70" width="4.52" height="139.94" fill="#8d94f6"/><rect x="1150.00" y="787.61" width="4.52" height="259.89" fill="#dde0fb"/><rect x="1150.00" y="627.67" width="4.52" height="159.93" fill="#b4b9f8"/><rect x="1150.00" y="567.70" width="4.52" height="59.97" fill="#8d94f6"/><rect x="1154.52" y="907.56" width="4.52" height="139.94" fill="#dde0fb"/><rect x="1154.52" y="647.67" width="4.52" height="259.89" fill="#b4b9f8"/><rect x="1154.52" y="567.70" width="4.52" height="79.97" fill="#8d94f6"/><rect x="1159.04" y="927.55" width="4.52" height="119.95" fill="#dde0fb"/><rect x="1159.04" y="707.64" width="4.52" height="219.91" fill="#b4b9f8"/><rect x="1159.04" y="567.70" width="4.52" height="139.94" fill="#8d94f6"/><rect x="1163.56" y="907.56" width="4.52" height="139.94" fill="#dde0fb"/><rect x="1163.56" y="747.62" width="4.52" height="159.93" fill="#b4b9f8"/><rect x="1163.56" y="567.70" width="4.52" height="179.92" fill="#8d94f6"/><rect x="1168.08" y="887.57" width="4.52" height="159.93" fill="#dde0fb"/><rect x="1168.08" y="687.65" width="4.52" height="199.92" fill="#b4b9f8"/><rect x="1168.08" y="567.70" width="4.52" height="119.95" fill="#8d94f6"/><rect x="1172.60" y="867.58" width="4.52" height="179.92" fill="#dde0fb"/><rect x="1172.60" y="667.66" width="4.52" height="199.92" fill="#b4b9f8"/><rect x="1172.60" y="567.70" width="4.52" height="99.96" fill="#8d94f6"/><rect x="1177.12" y="887.57" width="4.52" height="159.93" fill="#dde0fb"/><rect x="1177.12" y="707.64" width="4.52" height="179.93" fill="#b4b9f8"/><rect x="1177.12" y="567.70" width="4.52" height="139.94" fill="#8d94f6"/><rect x="1181.64" y="927.55" width="4.52" height="119.95" fill="#dde0fb"/><rect x="1181.64" y="747.62" width="4.52" height="179.92" fill="#b4b9f8"/><rect x="1181.64" y="567.70" width="4.52" height="179.92" fill="#8d94f6"/><rect x="1186.16" y="867.58" width="4.52" height="179.92" fill="#dde0fb"/><rect x="1186.16" y="747.62" width="4.52" height="119.95" fill="#b4b9f8"/><rect x="1186.16" y="567.70" width="4.52" height="179.92" fill="#8d94f6"/><rect x="1190.68" y="847.58" width="4.52" height="199.92" fill="#dde0fb"/><rect x="1190.68" y="667.66" width="4.52" height="179.93" fill="#b4b9f8"/><rect x="1190.68" y="567.70" width="4.52" height="99.96" fill="#8d94f6"/><rect x="1195.21" y="867.58" width="4.52" height="179.92" fill="#dde0fb"/><rect x="1195.21" y="727.63" width="4.52" height="139.94" fill="#b4b9f8"/><rect x="1195.21" y="567.70" width="4.52" height="159.93" fill="#8d94f6"/><rect x="1199.73" y="827.59" width="4.52" height="219.91" fill="#dde0fb"/><rect x="1199.73" y="727.63" width="4.52" height="99.96" fill="#b4b9f8"/><rect x="1199.73" y="567.70" width="4.52" height="159.93" fill="#8d94f6"/><rect x="1204.25" y="907.56" width="4.52" height="139.94" fill="#dde0fb"/><rect x="1204.25" y="607.68" width="4.52" height="299.88" fill="#b4b9f8"/><rect x="1204.25" y="567.70" width="4.52" height="39.98" fill="#8d94f6"/><rect x="1208.77" y="987.52" width="4.52" height="59.98" fill="#dde0fb"/><rect x="1208.77" y="707.64" width="4.52" height="279.88" fill="#b4b9f8"/><rect x="1208.77" y="567.70" width="4.52" height="139.94" fill="#8d94f6"/><rect x="1213.29" y="907.56" width="4.52" height="139.94" fill="#dde0fb"/><rect x="1213.29" y="747.62" width="4.52" height="159.93" fill="#b4b9f8"/><rect x="1213.29" y="567.70" width="4.52" height="179.92" fill="#8d94f6"/><rect x="1217.81" y="943.20" width="4.52" height="104.30" fill="#dde0fb"/><rect x="1217.81" y="755.45" width="4.52" height="187.75" fill="#b4b9f8"/><rect x="1217.81" y="567.70" width="4.52" height="187.75" fill="#8d94f6"/><rect x="1222.33" y="827.59" width="4.52" height="219.91" fill="#dde0fb"/><rect x="1222.33" y="667.66" width="4.52" height="159.93" fill="#b4b9f8"/><rect x="1222.33" y="567.70" width="4.52" height="99.96" fill="#8d94f6"/><rect x="1226.85" y="1007.52" width="4.52" height="39.98" fill="#dde0fb"/><rect x="1226.85" y="707.64" width="4.52" height="299.88" fill="#b4b9f8"/><rect x="1226.85" y="567.70" width="4.52" height="139.94" fill="#8d94f6"/><rect x="1231.37" y="827.59" width="4.52" height="219.91" fill="#dde0fb"/><rect x="1231.37" y="727.63" width="4.52" height="99.96" fill="#b4b9f8"/><rect x="1231.37" y="567.70" width="4.52" height="159.93" fill="#8d94f6"/><rect x="1235.89" y="867.58" width="4.52" height="179.92" fill="#dde0fb"/><rect x="1235.89" y="747.62" width="4.52" height="119.95" fill="#b4b9f8"/><rect x="1235.89" y="567.70" width="4.52" height="179.92" fill="#8d94f6"/><rect x="1240.41" y="807.60" width="4.52" height="239.90" fill="#dde0fb"/><rect x="1240.41" y="687.65" width="4.52" height="119.95" fill="#b4b9f8"/><rect x="1240.41" y="567.70" width="4.52" height="119.95" fill="#8d94f6"/><rect x="1244.93" y="927.55" width="4.52" height="119.95" fill="#dde0fb"/><rect x="1244.93" y="707.64" width="4.52" height="219.91" fill="#b4b9f8"/><rect x="1244.93" y="567.70" width="4.52" height="139.94" fill="#8d94f6"/><rect x="1249.45" y="887.57" width="4.52" height="159.93" fill="#dde0fb"/><rect x="1249.45" y="787.61" width="4.52" height="99.96" fill="#b4b9f8"/><rect x="1249.45" y="567.70" width="4.52" height="219.91" fill="#8d94f6"/><rect x="1253.97" y="867.58" width="4.52" height="179.92" fill="#dde0fb"/><rect x="1253.97" y="707.64" width="4.52" height="159.93" fill="#b4b9f8"/><rect x="1253.97" y="567.70" width="4.52" height="139.94" fill="#8d94f6"/><rect x="1258.49" y="847.58" width="4.52" height="199.92" fill="#dde0fb"/><rect x="1258.49" y="707.64" width="4.52" height="139.94" fill="#b4b9f8"/><rect x="1258.49" y="567.70" width="4.52" height="139.94" fill="#8d94f6"/><rect x="1263.01" y="927.55" width="4.52" height="119.95" fill="#dde0fb"/><rect x="1263.01" y="727.63" width="4.52" height="199.92" fill="#b4b9f8"/><rect x="1263.01" y="567.70" width="4.52" height="159.93" fill="#8d94f6"/><rect x="1267.53" y="907.56" width="4.52" height="139.94" fill="#dde0fb"/><rect x="1267.53" y="727.63" width="4.52" height="179.92" fill="#b4b9f8"/><rect x="1267.53" y="567.70" width="4.52" height="159.93" fill="#8d94f6"/><rect x="1272.05" y="867.58" width="4.52" height="179.92" fill="#dde0fb"/><rect x="1272.05" y="687.65" width="4.52" height="179.92" fill="#b4b9f8"/><rect x="1272.05" y="567.70" width="4.52" height="119.95" fill="#8d94f6"/><rect x="1276.58" y="947.54" width="4.52" height="99.96" fill="#dde0fb"/><rect x="1276.58" y="707.64" width="4.52" height="239.90" fill="#b4b9f8"/><rect x="1276.58" y="567.70" width="4.52" height="139.94" fill="#8d94f6"/><rect x="1281.10" y="847.58" width="4.52" height="199.92" fill="#dde0fb"/><rect x="1281.10" y="647.67" width="4.52" height="199.92" fill="#b4b9f8"/><rect x="1281.10" y="567.70" width="4.52" height="79.97" fill="#8d94f6"/><rect x="1285.62" y="967.53" width="4.52" height="79.97" fill="#dde0fb"/><rect x="1285.62" y="687.65" width="4.52" height="279.88" fill="#b4b9f8"/><rect x="1285.62" y="567.70" width="4.52" height="119.95" fill="#8d94f6"/><rect x="1290.14" y="927.55" width="4.52" height="119.95" fill="#dde0fb"/><rect x="1290.14" y="747.62" width="4.52" height="179.92" fill="#b4b9f8"/><rect x="1290.14" y="567.70" width="4.52" height="179.92" fill="#8d94f6"/><rect x="1294.66" y="867.58" width="4.52" height="179.92" fill="#dde0fb"/><rect x="1294.66" y="647.67" width="4.52" height="219.91" fill="#b4b9f8"/><rect x="1294.66" y="567.70" width="4.52" height="79.97" fill="#8d94f6"/><rect x="1299.18" y="927.55" width="4.52" height="119.95" fill="#dde0fb"/><rect x="1299.18" y="687.65" width="4.52" height="239.90" fill="#b4b9f8"/><rect x="1299.18" y="567.70" width="4.52" height="119.95" fill="#8d94f6"/><rect x="1303.70" y="847.58" width="4.52" height="199.92" fill="#dde0fb"/><rect x="1303.70" y="687.65" width="4.52" height="159.93" fill="#b4b9f8"/><rect x="1303.70" y="567.70" width="4.52" height="119.95" fill="#8d94f6"/><rect x="1308.22" y="927.55" width="4.52" height="119.95" fill="#dde0fb"/><rect x="1308.22" y="807.60" width="4.52" height="119.95" fill="#b4b9f8"/><rect x="1308.22" y="567.70" width="4.52" height="239.90" fill="#8d94f6"/><rect x="1312.74" y="887.57" width="4.52" height="159.93" fill="#dde0fb"/><rect x="1312.74" y="687.65" width="4.52" height="199.92" fill="#b4b9f8"/><rect x="1312.74" y="567.70" width="4.52" height="119.95" fill="#8d94f6"/><rect x="1317.26" y="827.59" width="4.52" height="219.91" fill="#dde0fb"/><rect x="1317.26" y="647.67" width="4.52" height="179.92" fill="#b4b9f8"/><rect x="1317.26" y="567.70" width="4.52" height="79.97" fill="#8d94f6"/><rect x="1321.78" y="867.58" width="4.52" height="179.92" fill="#dde0fb"/><rect x="1321.78" y="647.67" width="4.52" height="219.91" fill="#b4b9f8"/><rect x="1321.78" y="567.70" width="4.52" height="79.97" fill="#8d94f6"/><rect x="1326.30" y="827.59" width="4.52" height="219.91" fill="#dde0fb"/><rect x="1326.30" y="687.65" width="4.52" height="139.94" fill="#b4b9f8"/><rect x="1326.30" y="567.70" width="4.52" height="119.95" fill="#8d94f6"/><rect x="1330.82" y="807.60" width="4.52" height="239.90" fill="#dde0fb"/><rect x="1330.82" y="647.67" width="4.52" height="159.93" fill="#b4b9f8"/><rect x="1330.82" y="567.70" width="4.52" height="79.97" fill="#8d94f6"/><rect x="1335.34" y="847.58" width="4.52" height="199.92" fill="#dde0fb"/><rect x="1335.34" y="647.67" width="4.52" height="199.92" fill="#b4b9f8"/><rect x="1335.34" y="567.70" width="4.52" height="79.97" fill="#8d94f6"/><rect x="1339.86" y="847.58" width="4.52" height="199.92" fill="#dde0fb"/><rect x="1339.86" y="707.64" width="4.52" height="139.94" fill="#b4b9f8"/><rect x="1339.86" y="567.70" width="4.52" height="139.94" fill="#8d94f6"/><rect x="1344.38" y="847.58" width="4.52" height="199.92" fill="#dde0fb"/><rect x="1344.38" y="647.67" width="4.52" height="199.92" fill="#b4b9f8"/><rect x="1344.38" y="567.70" width="4.52" height="79.97" fill="#8d94f6"/><rect x="1348.90" y="907.56" width="4.52" height="139.94" fill="#dde0fb"/><rect x="1348.90" y="687.65" width="4.52" height="219.91" fill="#b4b9f8"/><rect x="1348.90" y="567.70" width="4.52" height="119.95" fill="#8d94f6"/><rect x="1353.42" y="887.57" width="4.52" height="159.93" fill="#dde0fb"/><rect x="1353.42" y="747.62" width="4.52" height="139.94" fill="#b4b9f8"/><rect x="1353.42" y="567.70" width="4.52" height="179.92" fill="#8d94f6"/><rect x="1357.95" y="887.57" width="4.52" height="159.93" fill="#dde0fb"/><rect x="1357.95" y="687.65" width="4.52" height="199.92" fill="#b4b9f8"/><rect x="1357.95" y="567.70" width="4.52" height="119.95" fill="#8d94f6"/><rect x="1362.47" y="907.56" width="4.52" height="139.94" fill="#dde0fb"/><rect x="1362.47" y="727.63" width="4.52" height="179.92" fill="#b4b9f8"/><rect x="1362.47" y="567.70" width="4.52" height="159.93" fill="#8d94f6"/><rect x="1366.99" y="927.55" width="4.52" height="119.95" fill="#dde0fb"/><rect x="1366.99" y="707.64" width="4.52" height="219.91" fill="#b4b9f8"/><rect x="1366.99" y="567.70" width="4.52" height="139.94" fill="#8d94f6"/><rect x="1371.51" y="907.56" width="4.52" height="139.94" fill="#dde0fb"/><rect x="1371.51" y="787.61" width="4.52" height="119.95" fill="#b4b9f8"/><rect x="1371.51" y="567.70" width="4.52" height="219.91" fill="#8d94f6"/><rect x="1376.03" y="887.57" width="4.52" height="159.93" fill="#dde0fb"/><rect x="1376.03" y="727.63" width="4.52" height="159.93" fill="#b4b9f8"/><rect x="1376.03" y="567.70" width="4.52" height="159.93" fill="#8d94f6"/><rect x="1380.55" y="887.57" width="4.52" height="159.93" fill="#dde0fb"/><rect x="1380.55" y="747.62" width="4.52" height="139.94" fill="#b4b9f8"/><rect x="1380.55" y="567.70" width="4.52" height="179.92" fill="#8d94f6"/><rect x="1385.07" y="847.58" width="4.52" height="199.92" fill="#dde0fb"/><rect x="1385.07" y="687.65" width="4.52" height="159.93" fill="#b4b9f8"/><rect x="1385.07" y="567.70" width="4.52" height="119.95" fill="#8d94f6"/><rect x="1389.59" y="867.58" width="4.52" height="179.92" fill="#dde0fb"/><rect x="1389.59" y="767.62" width="4.52" height="99.96" fill="#b4b9f8"/><rect x="1389.59" y="567.70" width="4.52" height="199.92" fill="#8d94f6"/><rect x="1394.11" y="867.58" width="4.52" height="179.92" fill="#dde0fb"/><rect x="1394.11" y="647.67" width="4.52" height="219.91" fill="#b4b9f8"/><rect x="1394.11" y="567.70" width="4.52" height="79.97" fill="#8d94f6"/><rect x="1398.63" y="887.57" width="4.52" height="159.93" fill="#dde0fb"/><rect x="1398.63" y="767.62" width="4.52" height="119.95" fill="#b4b9f8"/><rect x="1398.63" y="567.70" width="4.52" height="199.92" fill="#8d94f6"/><rect x="1403.15" y="867.58" width="4.52" height="179.92" fill="#dde0fb"/><rect x="1403.15" y="687.65" width="4.52" height="179.92" fill="#b4b9f8"/><rect x="1403.15" y="567.70" width="4.52" height="119.95" fill="#8d94f6"/><rect x="1407.67" y="947.54" width="4.52" height="99.96" fill="#dde0fb"/><rect x="1407.67" y="747.62" width="4.52" height="199.92" fill="#b4b9f8"/><rect x="1407.67" y="567.70" width="4.52" height="179.92" fill="#8d94f6"/><rect x="1412.19" y="927.55" width="4.52" height="119.95" fill="#dde0fb"/><rect x="1412.19" y="647.67" width="4.52" height="279.88" fill="#b4b9f8"/><rect x="1412.19" y="567.70" width="4.52" height="79.97" fill="#8d94f6"/><rect x="1416.71" y="907.56" width="4.52" height="139.94" fill="#dde0fb"/><rect x="1416.71" y="767.62" width="4.52" height="139.94" fill="#b4b9f8"/><rect x="1416.71" y="567.70" width="4.52" height="199.92" fill="#8d94f6"/><rect x="1421.23" y="847.58" width="4.52" height="199.92" fill="#dde0fb"/><rect x="1421.23" y="647.67" width="4.52" height="199.92" fill="#b4b9f8"/><rect x="1421.23" y="567.70" width="4.52" height="79.97" fill="#8d94f6"/><rect x="1425.75" y="827.59" width="4.52" height="219.91" fill="#dde0fb"/><rect x="1425.75" y="647.67" width="4.52" height="179.92" fill="#b4b9f8"/><rect x="1425.75" y="567.70" width="4.52" height="79.97" fill="#8d94f6"/><rect x="1430.27" y="907.56" width="4.52" height="139.94" fill="#dde0fb"/><rect x="1430.27" y="707.64" width="4.52" height="199.92" fill="#b4b9f8"/><rect x="1430.27" y="567.70" width="4.52" height="139.94" fill="#8d94f6"/><rect x="1434.79" y="887.57" width="4.52" height="159.93" fill="#dde0fb"/><rect x="1434.79" y="767.62" width="4.52" height="119.95" fill="#b4b9f8"/><rect x="1434.79" y="567.70" width="4.52" height="199.92" fill="#8d94f6"/><rect x="1439.32" y="887.57" width="4.52" height="159.93" fill="#dde0fb"/><rect x="1439.32" y="727.63" width="4.52" height="159.93" fill="#b4b9f8"/><rect x="1439.32" y="567.70" width="4.52" height="159.93" fill="#8d94f6"/><rect x="1443.84" y="907.56" width="4.52" height="139.94" fill="#dde0fb"/><rect x="1443.84" y="727.63" width="4.52" height="179.92" fill="#b4b9f8"/><rect x="1443.84" y="567.70" width="4.52" height="159.93" fill="#8d94f6"/><rect x="1448.36" y="947.54" width="4.52" height="99.96" fill="#dde0fb"/><rect x="1448.36" y="707.64" width="4.52" height="239.90" fill="#b4b9f8"/><rect x="1448.36" y="567.70" width="4.52" height="139.94" fill="#8d94f6"/><rect x="1452.88" y="947.54" width="4.52" height="99.96" fill="#dde0fb"/><rect x="1452.88" y="687.65" width="4.52" height="259.89" fill="#b4b9f8"/><rect x="1452.88" y="567.70" width="4.52" height="119.95" fill="#8d94f6"/><rect x="1457.40" y="947.54" width="4.52" height="99.96" fill="#dde0fb"/><rect x="1457.40" y="707.64" width="4.52" height="239.90" fill="#b4b9f8"/><rect x="1457.40" y="567.70" width="4.52" height="139.94" fill="#8d94f6"/><rect x="1461.92" y="807.60" width="4.52" height="239.90" fill="#dde0fb"/><rect x="1461.92" y="687.65" width="4.52" height="119.95" fill="#b4b9f8"/><rect x="1461.92" y="567.70" width="4.52" height="119.95" fill="#8d94f6"/><rect x="1466.44" y="927.55" width="4.52" height="119.95" fill="#dde0fb"/><rect x="1466.44" y="707.64" width="4.52" height="219.91" fill="#b4b9f8"/><rect x="1466.44" y="567.70" width="4.52" height="139.94" fill="#8d94f6"/><rect x="1470.96" y="867.58" width="4.52" height="179.92" fill="#dde0fb"/><rect x="1470.96" y="647.67" width="4.52" height="219.91" fill="#b4b9f8"/><rect x="1470.96" y="567.70" width="4.52" height="79.97" fill="#8d94f6"/><rect x="1475.48" y="907.56" width="4.52" height="139.94" fill="#dde0fb"/><rect x="1475.48" y="707.64" width="4.52" height="199.92" fill="#b4b9f8"/><rect x="1475.48" y="567.70" width="4.52" height="139.94" fill="#8d94f6"/><rect x="1480.00" y="947.54" width="4.52" height="99.96" fill="#dde0fb"/><rect x="1480.00" y="767.62" width="4.52" height="179.92" fill="#b4b9f8"/><rect x="1480.00" y="567.70" width="4.52" height="199.92" fill="#8d94f6"/><rect x="1484.52" y="907.56" width="4.52" height="139.94" fill="#dde0fb"/><rect x="1484.52" y="767.62" width="4.52" height="139.94" fill="#b4b9f8"/><rect x="1484.52" y="567.70" width="4.52" height="199.92" fill="#8d94f6"/><rect x="1489.04" y="907.56" width="4.52" height="139.94" fill="#dde0fb"/><rect x="1489.04" y="687.65" width="4.52" height="219.91" fill="#b4b9f8"/><rect x="1489.04" y="567.70" width="4.52" height="119.95" fill="#8d94f6"/><rect x="1493.56" y="887.57" width="4.52" height="159.93" fill="#dde0fb"/><rect x="1493.56" y="787.61" width="4.52" height="99.96" fill="#b4b9f8"/><rect x="1493.56" y="567.70" width="4.52" height="219.91" fill="#8d94f6"/><rect x="1498.08" y="847.58" width="4.52" height="199.92" fill="#dde0fb"/><rect x="1498.08" y="687.65" width="4.52" height="159.93" fill="#b4b9f8"/><rect x="1498.08" y="567.70" width="4.52" height="119.95" fill="#8d94f6"/><rect x="1502.60" y="967.53" width="4.52" height="79.97" fill="#dde0fb"/><rect x="1502.60" y="787.61" width="4.52" height="179.92" fill="#b4b9f8"/><rect x="1502.60" y="567.70" width="4.52" height="219.91" fill="#8d94f6"/><rect x="1507.12" y="907.56" width="4.52" height="139.94" fill="#dde0fb"/><rect x="1507.12" y="787.61" width="4.52" height="119.95" fill="#b4b9f8"/><rect x="1507.12" y="567.70" width="4.52" height="219.91" fill="#8d94f6"/><rect x="1511.64" y="867.58" width="4.52" height="179.92" fill="#dde0fb"/><rect x="1511.64" y="647.67" width="4.52" height="219.91" fill="#b4b9f8"/><rect x="1511.64" y="567.70" width="4.52" height="79.97" fill="#8d94f6"/><rect x="1516.16" y="887.57" width="4.52" height="159.93" fill="#dde0fb"/><rect x="1516.16" y="787.61" width="4.52" height="99.96" fill="#b4b9f8"/><rect x="1516.16" y="567.70" width="4.52" height="219.91" fill="#8d94f6"/><rect x="1520.68" y="927.55" width="4.52" height="119.95" fill="#dde0fb"/><rect x="1520.68" y="787.61" width="4.52" height="139.94" fill="#b4b9f8"/><rect x="1520.68" y="567.70" width="4.52" height="219.91" fill="#8d94f6"/><rect x="1525.21" y="967.53" width="4.52" height="79.97" fill="#dde0fb"/><rect x="1525.21" y="707.64" width="4.52" height="259.89" fill="#b4b9f8"/><rect x="1525.21" y="567.70" width="4.52" height="139.94" fill="#8d94f6"/><rect x="1529.73" y="907.56" width="4.52" height="139.94" fill="#dde0fb"/><rect x="1529.73" y="807.60" width="4.52" height="99.96" fill="#b4b9f8"/><rect x="1529.73" y="567.70" width="4.52" height="239.90" fill="#8d94f6"/><rect x="1534.25" y="907.56" width="4.52" height="139.94" fill="#dde0fb"/><rect x="1534.25" y="747.62" width="4.52" height="159.93" fill="#b4b9f8"/><rect x="1534.25" y="567.70" width="4.52" height="179.92" fill="#8d94f6"/><rect x="1538.77" y="887.57" width="4.52" height="159.93" fill="#dde0fb"/><rect x="1538.77" y="767.62" width="4.52" height="119.95" fill="#b4b9f8"/><rect x="1538.77" y="567.70" width="4.52" height="199.92" fill="#8d94f6"/><rect x="1543.29" y="907.56" width="4.52" height="139.94" fill="#dde0fb"/><rect x="1543.29" y="647.67" width="4.52" height="259.89" fill="#b4b9f8"/><rect x="1543.29" y="567.70" width="4.52" height="79.97" fill="#8d94f6"/><rect x="1547.81" y="847.58" width="4.52" height="199.92" fill="#dde0fb"/><rect x="1547.81" y="707.64" width="4.52" height="139.94" fill="#b4b9f8"/><rect x="1547.81" y="567.70" width="4.52" height="139.94" fill="#8d94f6"/><rect x="1552.33" y="967.53" width="4.52" height="79.97" fill="#dde0fb"/><rect x="1552.33" y="707.64" width="4.52" height="259.89" fill="#b4b9f8"/><rect x="1552.33" y="567.70" width="4.52" height="139.94" fill="#8d94f6"/><rect x="1556.85" y="907.56" width="4.52" height="139.94" fill="#dde0fb"/><rect x="1556.85" y="707.64" width="4.52" height="199.92" fill="#b4b9f8"/><rect x="1556.85" y="567.70" width="4.52" height="139.94" fill="#8d94f6"/><rect x="1561.37" y="887.57" width="4.52" height="159.93" fill="#dde0fb"/><rect x="1561.37" y="747.62" width="4.52" height="139.94" fill="#b4b9f8"/><rect x="1561.37" y="567.70" width="4.52" height="179.92" fill="#8d94f6"/><rect x="1565.89" y="887.57" width="4.52" height="159.93" fill="#dde0fb"/><rect x="1565.89" y="767.62" width="4.52" height="119.95" fill="#b4b9f8"/><rect x="1565.89" y="567.70" width="4.52" height="199.92" fill="#8d94f6"/><rect x="1570.41" y="907.56" width="4.52" height="139.94" fill="#dde0fb"/><rect x="1570.41" y="727.63" width="4.52" height="179.92" fill="#b4b9f8"/><rect x="1570.41" y="567.70" width="4.52" height="159.93" fill="#8d94f6"/><rect x="1574.93" y="787.61" width="4.52" height="259.89" fill="#dde0fb"/><rect x="1574.93" y="647.67" width="4.52" height="139.94" fill="#b4b9f8"/><rect x="1574.93" y="567.70" width="4.52" height="79.97" fill="#8d94f6"/><rect x="1579.45" y="867.58" width="4.52" height="179.92" fill="#dde0fb"/><rect x="1579.45" y="647.67" width="4.52" height="219.91" fill="#b4b9f8"/><rect x="1579.45" y="567.70" width="4.52" height="79.97" fill="#8d94f6"/><rect x="1583.97" y="847.58" width="4.52" height="199.92" fill="#dde0fb"/><rect x="1583.97" y="647.67" width="4.52" height="199.92" fill="#b4b9f8"/><rect x="1583.97" y="567.70" width="4.52" height="79.97" fill="#8d94f6"/><rect x="1588.49" y="887.57" width="4.52" height="159.93" fill="#dde0fb"/><rect x="1588.49" y="727.63" width="4.52" height="159.93" fill="#b4b9f8"/><rect x="1588.49" y="567.70" width="4.52" height="159.93" fill="#8d94f6"/><rect x="1593.01" y="887.57" width="4.52" height="159.93" fill="#dde0fb"/><rect x="1593.01" y="647.67" width="4.52" height="239.90" fill="#b4b9f8"/><rect x="1593.01" y="567.70" width="4.52" height="79.97" fill="#8d94f6"/><rect x="1597.53" y="967.53" width="4.52" height="79.97" fill="#dde0fb"/><rect x="1597.53" y="747.62" width="4.52" height="219.91" fill="#b4b9f8"/><rect x="1597.53" y="567.70" width="4.52" height="179.92" fill="#8d94f6"/><rect x="1602.05" y="827.59" width="4.52" height="219.91" fill="#dde0fb"/><rect x="1602.05" y="687.65" width="4.52" height="139.94" fill="#b4b9f8"/><rect x="1602.05" y="567.70" width="4.52" height="119.95" fill="#8d94f6"/><rect x="1606.58" y="947.54" width="4.52" height="99.96" fill="#dde0fb"/><rect x="1606.58" y="727.63" width="4.52" height="219.91" fill="#b4b9f8"/><rect x="1606.58" y="567.70" width="4.52" height="159.93" fill="#8d94f6"/><rect x="1611.10" y="827.59" width="4.52" height="219.91" fill="#dde0fb"/><rect x="1611.10" y="707.64" width="4.52" height="119.95" fill="#b4b9f8"/><rect x="1611.10" y="567.70" width="4.52" height="139.94" fill="#8d94f6"/><rect x="1615.62" y="907.56" width="4.52" height="139.94" fill="#dde0fb"/><rect x="1615.62" y="687.65" width="4.52" height="219.91" fill="#b4b9f8"/><rect x="1615.62" y="567.70" width="4.52" height="119.95" fill="#8d94f6"/><rect x="1620.14" y="867.58" width="4.52" height="179.92" fill="#dde0fb"/><rect x="1620.14" y="647.67" width="4.52" height="219.91" fill="#b4b9f8"/><rect x="1620.14" y="567.70" width="4.52" height="79.97" fill="#8d94f6"/><rect x="1624.66" y="907.56" width="4.52" height="139.94" fill="#dde0fb"/><rect x="1624.66" y="647.67" width="4.52" height="259.89" fill="#b4b9f8"/><rect x="1624.66" y="567.70" width="4.52" height="79.97" fill="#8d94f6"/><rect x="1629.18" y="847.58" width="4.52" height="199.92" fill="#dde0fb"/><rect x="1629.18" y="707.64" width="4.52" height="139.94" fill="#b4b9f8"/><rect x="1629.18" y="567.70" width="4.52" height="139.94" fill="#8d94f6"/><rect x="1633.70" y="947.54" width="4.52" height="99.96" fill="#dde0fb"/><rect x="1633.70" y="707.64" width="4.52" height="239.90" fill="#b4b9f8"/><rect x="1633.70" y="567.70" width="4.52" height="139.94" fill="#8d94f6"/><rect x="1638.22" y="887.57" width="4.52" height="159.93" fill="#dde0fb"/><rect x="1638.22" y="767.62" width="4.52" height="119.95" fill="#b4b9f8"/><rect x="1638.22" y="567.70" width="4.52" height="199.92" fill="#8d94f6"/><rect x="1642.74" y="927.55" width="4.52" height="119.95" fill="#dde0fb"/><rect x="1642.74" y="707.64" width="4.52" height="219.91" fill="#b4b9f8"/><rect x="1642.74" y="567.70" width="4.52" height="139.94" fill="#8d94f6"/><rect x="1647.26" y="967.53" width="4.52" height="79.97" fill="#dde0fb"/><rect x="1647.26" y="727.63" width="4.52" height="239.90" fill="#b4b9f8"/><rect x="1647.26" y="567.70" width="4.52" height="159.93" fill="#8d94f6"/><rect x="1651.78" y="867.58" width="4.52" height="179.92" fill="#dde0fb"/><rect x="1651.78" y="687.65" width="4.52" height="179.92" fill="#b4b9f8"/><rect x="1651.78" y="567.70" width="4.52" height="119.95" fill="#8d94f6"/><rect x="1656.30" y="967.53" width="4.52" height="79.97" fill="#dde0fb"/><rect x="1656.30" y="707.64" width="4.52" height="259.89" fill="#b4b9f8"/><rect x="1656.30" y="567.70" width="4.52" height="139.94" fill="#8d94f6"/><rect x="1660.82" y="987.52" width="4.52" height="59.98" fill="#dde0fb"/><rect x="1660.82" y="727.63" width="4.52" height="259.89" fill="#b4b9f8"/><rect x="1660.82" y="567.70" width="4.52" height="159.93" fill="#8d94f6"/><rect x="1665.34" y="947.54" width="4.52" height="99.96" fill="#dde0fb"/><rect x="1665.34" y="687.65" width="4.52" height="259.89" fill="#b4b9f8"/><rect x="1665.34" y="567.70" width="4.52" height="119.95" fill="#8d94f6"/><rect x="1669.86" y="847.58" width="4.52" height="199.92" fill="#dde0fb"/><rect x="1669.86" y="667.66" width="4.52" height="179.93" fill="#b4b9f8"/><rect x="1669.86" y="567.70" width="4.52" height="99.96" fill="#8d94f6"/><rect x="1674.38" y="887.57" width="4.52" height="159.93" fill="#dde0fb"/><rect x="1674.38" y="727.63" width="4.52" height="159.93" fill="#b4b9f8"/><rect x="1674.38" y="567.70" width="4.52" height="159.93" fill="#8d94f6"/><rect x="1678.90" y="827.59" width="4.52" height="219.91" fill="#dde0fb"/><rect x="1678.90" y="687.65" width="4.52" height="139.94" fill="#b4b9f8"/><rect x="1678.90" y="567.70" width="4.52" height="119.95" fill="#8d94f6"/><rect x="1683.42" y="887.57" width="4.52" height="159.93" fill="#dde0fb"/><rect x="1683.42" y="707.64" width="4.52" height="179.93" fill="#b4b9f8"/><rect x="1683.42" y="567.70" width="4.52" height="139.94" fill="#8d94f6"/><rect x="1687.95" y="887.57" width="4.52" height="159.93" fill="#dde0fb"/><rect x="1687.95" y="747.62" width="4.52" height="139.94" fill="#b4b9f8"/><rect x="1687.95" y="567.70" width="4.52" height="179.92" fill="#8d94f6"/><rect x="1692.47" y="867.58" width="4.52" height="179.92" fill="#dde0fb"/><rect x="1692.47" y="767.62" width="4.52" height="99.96" fill="#b4b9f8"/><rect x="1692.47" y="567.70" width="4.52" height="199.92" fill="#8d94f6"/><rect x="1696.99" y="927.55" width="4.52" height="119.95" fill="#dde0fb"/><rect x="1696.99" y="807.60" width="4.52" height="119.95" fill="#b4b9f8"/><rect x="1696.99" y="567.70" width="4.52" height="239.90" fill="#8d94f6"/><rect x="1701.51" y="907.56" width="4.52" height="139.94" fill="#dde0fb"/><rect x="1701.51" y="667.66" width="4.52" height="239.90" fill="#b4b9f8"/><rect x="1701.51" y="567.70" width="4.52" height="99.96" fill="#8d94f6"/><rect x="1706.03" y="907.56" width="4.52" height="139.94" fill="#dde0fb"/><rect x="1706.03" y="707.64" width="4.52" height="199.92" fill="#b4b9f8"/><rect x="1706.03" y="567.70" width="4.52" height="139.94" fill="#8d94f6"/><rect x="1710.55" y="947.54" width="4.52" height="99.96" fill="#dde0fb"/><rect x="1710.55" y="707.64" width="4.52" height="239.90" fill="#b4b9f8"/><rect x="1710.55" y="567.70" width="4.52" height="139.94" fill="#8d94f6"/><rect x="1715.07" y="847.58" width="4.52" height="199.92" fill="#dde0fb"/><rect x="1715.07" y="687.65" width="4.52" height="159.93" fill="#b4b9f8"/><rect x="1715.07" y="567.70" width="4.52" height="119.95" fill="#8d94f6"/><rect x="1719.59" y="827.59" width="4.52" height="219.91" fill="#dde0fb"/><rect x="1719.59" y="747.62" width="4.52" height="79.97" fill="#b4b9f8"/><rect x="1719.59" y="567.70" width="4.52" height="179.92" fill="#8d94f6"/><rect x="1724.11" y="867.58" width="4.52" height="179.92" fill="#dde0fb"/><rect x="1724.11" y="707.64" width="4.52" height="159.93" fill="#b4b9f8"/><rect x="1724.11" y="567.70" width="4.52" height="139.94" fill="#8d94f6"/><rect x="1728.63" y="907.56" width="4.52" height="139.94" fill="#dde0fb"/><rect x="1728.63" y="687.65" width="4.52" height="219.91" fill="#b4b9f8"/><rect x="1728.63" y="567.70" width="4.52" height="119.95" fill="#8d94f6"/><rect x="1733.15" y="967.53" width="4.52" height="79.97" fill="#dde0fb"/><rect x="1733.15" y="747.62" width="4.52" height="219.91" fill="#b4b9f8"/><rect x="1733.15" y="567.70" width="4.52" height="179.92" fill="#8d94f6"/><rect x="1737.67" y="967.53" width="4.52" height="79.97" fill="#dde0fb"/><rect x="1737.67" y="727.63" width="4.52" height="239.90" fill="#b4b9f8"/><rect x="1737.67" y="567.70" width="4.52" height="159.93" fill="#8d94f6"/><rect x="1742.19" y="927.55" width="4.52" height="119.95" fill="#dde0fb"/><rect x="1742.19" y="727.63" width="4.52" height="199.92" fill="#b4b9f8"/><rect x="1742.19" y="567.70" width="4.52" height="159.93" fill="#8d94f6"/><rect x="1746.71" y="947.54" width="4.52" height="99.96" fill="#dde0fb"/><rect x="1746.71" y="667.66" width="4.52" height="279.88" fill="#b4b9f8"/><rect x="1746.71" y="567.70" width="4.52" height="99.96" fill="#8d94f6"/><rect x="1751.23" y="907.56" width="4.52" height="139.94" fill="#dde0fb"/><rect x="1751.23" y="727.63" width="4.52" height="179.92" fill="#b4b9f8"/><rect x="1751.23" y="567.70" width="4.52" height="159.93" fill="#8d94f6"/><rect x="1755.75" y="907.56" width="4.52" height="139.94" fill="#dde0fb"/><rect x="1755.75" y="727.63" width="4.52" height="179.92" fill="#b4b9f8"/><rect x="1755.75" y="567.70" width="4.52" height="159.93" fill="#8d94f6"/><rect x="1760.27" y="927.55" width="4.52" height="119.95" fill="#dde0fb"/><rect x="1760.27" y="707.64" width="4.52" height="219.91" fill="#b4b9f8"/><rect x="1760.27" y="567.70" width="4.52" height="139.94" fill="#8d94f6"/><rect x="1764.79" y="907.56" width="4.52" height="139.94" fill="#dde0fb"/><rect x="1764.79" y="687.65" width="4.52" height="219.91" fill="#b4b9f8"/><rect x="1764.79" y="567.70" width="4.52" height="119.95" fill="#8d94f6"/><rect x="1769.32" y="907.56" width="4.52" height="139.94" fill="#dde0fb"/><rect x="1769.32" y="787.61" width="4.52" height="119.95" fill="#b4b9f8"/><rect x="1769.32" y="567.70" width="4.52" height="219.91" fill="#8d94f6"/><rect x="1773.84" y="847.58" width="4.52" height="199.92" fill="#dde0fb"/><rect x="1773.84" y="627.67" width="4.52" height="219.91" fill="#b4b9f8"/><rect x="1773.84" y="567.70" width="4.52" height="59.97" fill="#8d94f6"/><rect x="1778.36" y="887.57" width="4.52" height="159.93" fill="#dde0fb"/><rect x="1778.36" y="707.64" width="4.52" height="179.93" fill="#b4b9f8"/><rect x="1778.36" y="567.70" width="4.52" height="139.94" fill="#8d94f6"/><rect x="1782.88" y="907.56" width="4.52" height="139.94" fill="#dde0fb"/><rect x="1782.88" y="707.64" width="4.52" height="199.92" fill="#b4b9f8"/><rect x="1782.88" y="567.70" width="4.52" height="139.94" fill="#8d94f6"/><rect x="1787.40" y="847.58" width="4.52" height="199.92" fill="#dde0fb"/><rect x="1787.40" y="667.66" width="4.52" height="179.93" fill="#b4b9f8"/><rect x="1787.40" y="567.70" width="4.52" height="99.96" fill="#8d94f6"/><rect x="1791.92" y="887.57" width="4.52" height="159.93" fill="#dde0fb"/><rect x="1791.92" y="687.65" width="4.52" height="199.92" fill="#b4b9f8"/><rect x="1791.92" y="567.70" width="4.52" height="119.95" fill="#8d94f6"/><rect x="1796.44" y="927.55" width="4.52" height="119.95" fill="#dde0fb"/><rect x="1796.44" y="767.62" width="4.52" height="159.93" fill="#b4b9f8"/><rect x="1796.44" y="567.70" width="4.52" height="199.92" fill="#8d94f6"/><rect x="1800.96" y="887.57" width="4.52" height="159.93" fill="#dde0fb"/><rect x="1800.96" y="687.65" width="4.52" height="199.92" fill="#b4b9f8"/><rect x="1800.96" y="567.70" width="4.52" height="119.95" fill="#8d94f6"/><rect x="1805.48" y="887.57" width="4.52" height="159.93" fill="#dde0fb"/><rect x="1805.48" y="787.61" width="4.52" height="99.96" fill="#b4b9f8"/><rect x="1805.48" y="567.70" width="4.52" height="219.91" fill="#8d94f6"/><rect x="1810.00" y="867.58" width="4.52" height="179.92" fill="#dde0fb"/><rect x="1810.00" y="707.64" width="4.52" height="159.93" fill="#b4b9f8"/><rect x="1810.00" y="567.70" width="4.52" height="139.94" fill="#8d94f6"/><rect x="1814.52" y="927.55" width="4.52" height="119.95" fill="#dde0fb"/><rect x="1814.52" y="767.62" width="4.52" height="159.93" fill="#b4b9f8"/><rect x="1814.52" y="567.70" width="4.52" height="199.92" fill="#8d94f6"/><rect x="1819.04" y="927.55" width="4.52" height="119.95" fill="#dde0fb"/><rect x="1819.04" y="687.65" width="4.52" height="239.90" fill="#b4b9f8"/><rect x="1819.04" y="567.70" width="4.52" height="119.95" fill="#8d94f6"/><rect x="1823.56" y="907.56" width="4.52" height="139.94" fill="#dde0fb"/><rect x="1823.56" y="747.62" width="4.52" height="159.93" fill="#b4b9f8"/><rect x="1823.56" y="567.70" width="4.52" height="179.92" fill="#8d94f6"/><rect x="1828.08" y="947.54" width="4.52" height="99.96" fill="#dde0fb"/><rect x="1828.08" y="667.66" width="4.52" height="279.88" fill="#b4b9f8"/><rect x="1828.08" y="567.70" width="4.52" height="99.96" fill="#8d94f6"/><rect x="1832.60" y="907.56" width="4.52" height="139.94" fill="#dde0fb"/><rect x="1832.60" y="767.62" width="4.52" height="139.94" fill="#b4b9f8"/><rect x="1832.60" y="567.70" width="4.52" height="199.92" fill="#8d94f6"/><rect x="1837.12" y="887.57" width="4.52" height="159.93" fill="#dde0fb"/><rect x="1837.12" y="747.62" width="4.52" height="139.94" fill="#b4b9f8"/><rect x="1837.12" y="567.70" width="4.52" height="179.92" fill="#8d94f6"/><rect x="1841.64" y="927.55" width="4.52" height="119.95" fill="#dde0fb"/><rect x="1841.64" y="747.62" width="4.52" height="179.92" fill="#b4b9f8"/><rect x="1841.64" y="567.70" width="4.52" height="179.92" fill="#8d94f6"/><rect x="1846.16" y="847.58" width="4.52" height="199.92" fill="#dde0fb"/><rect x="1846.16" y="667.66" width="4.52" height="179.93" fill="#b4b9f8"/><rect x="1846.16" y="567.70" width="4.52" height="99.96" fill="#8d94f6"/><rect x="1850.68" y="887.57" width="4.52" height="159.93" fill="#dde0fb"/><rect x="1850.68" y="687.65" width="4.52" height="199.92" fill="#b4b9f8"/><rect x="1850.68" y="567.70" width="4.52" height="119.95" fill="#8d94f6"/><rect x="1855.21" y="947.54" width="4.52" height="99.96" fill="#dde0fb"/><rect x="1855.21" y="727.63" width="4.52" height="219.91" fill="#b4b9f8"/><rect x="1855.21" y="567.70" width="4.52" height="159.93" fill="#8d94f6"/><rect x="1859.73" y="927.55" width="4.52" height="119.95" fill="#dde0fb"/><rect x="1859.73" y="747.62" width="4.52" height="179.92" fill="#b4b9f8"/><rect x="1859.73" y="567.70" width="4.52" height="179.92" fill="#8d94f6"/><rect x="1864.25" y="947.54" width="4.52" height="99.96" fill="#dde0fb"/><rect x="1864.25" y="707.64" width="4.52" height="239.90" fill="#b4b9f8"/><rect x="1864.25" y="567.70" width="4.52" height="139.94" fill="#8d94f6"/><rect x="1868.77" y="867.58" width="4.52" height="179.92" fill="#dde0fb"/><rect x="1868.77" y="767.62" width="4.52" height="99.96" fill="#b4b9f8"/><rect x="1868.77" y="567.70" width="4.52" height="199.92" fill="#8d94f6"/><rect x="1873.29" y="927.55" width="4.52" height="119.95" fill="#dde0fb"/><rect x="1873.29" y="767.62" width="4.52" height="159.93" fill="#b4b9f8"/><rect x="1873.29" y="567.70" width="4.52" height="199.92" fill="#8d94f6"/><rect x="1877.81" y="947.54" width="4.52" height="99.96" fill="#dde0fb"/><rect x="1877.81" y="747.62" width="4.52" height="199.92" fill="#b4b9f8"/><rect x="1877.81" y="567.70" width="4.52" height="179.92" fill="#8d94f6"/><rect x="1882.33" y="847.58" width="4.52" height="199.92" fill="#dde0fb"/><rect x="1882.33" y="667.66" width="4.52" height="179.93" fill="#b4b9f8"/><rect x="1882.33" y="567.70" width="4.52" height="99.96" fill="#8d94f6"/><rect x="1886.85" y="847.58" width="4.52" height="199.92" fill="#dde0fb"/><rect x="1886.85" y="667.66" width="4.52" height="179.93" fill="#b4b9f8"/><rect x="1886.85" y="567.70" width="4.52" height="99.96" fill="#8d94f6"/><rect x="1891.37" y="847.58" width="4.52" height="199.92" fill="#dde0fb"/><rect x="1891.37" y="727.63" width="4.52" height="119.95" fill="#b4b9f8"/><rect x="1891.37" y="567.70" width="4.52" height="159.93" fill="#8d94f6"/><rect x="1895.89" y="867.58" width="4.52" height="179.92" fill="#dde0fb"/><rect x="1895.89" y="647.67" width="4.52" height="219.91" fill="#b4b9f8"/><rect x="1895.89" y="567.70" width="4.52" height="79.97" fill="#8d94f6"/><rect x="1900.41" y="947.54" width="4.52" height="99.96" fill="#dde0fb"/><rect x="1900.41" y="727.63" width="4.52" height="219.91" fill="#b4b9f8"/><rect x="1900.41" y="567.70" width="4.52" height="159.93" fill="#8d94f6"/><rect x="1904.93" y="947.54" width="4.52" height="99.96" fill="#dde0fb"/><rect x="1904.93" y="807.60" width="4.52" height="139.94" fill="#b4b9f8"/><rect x="1904.93" y="567.70" width="4.52" height="239.90" fill="#8d94f6"/><rect x="1909.45" y="887.57" width="4.52" height="159.93" fill="#dde0fb"/><rect x="1909.45" y="687.65" width="4.52" height="199.92" fill="#b4b9f8"/><rect x="1909.45" y="567.70" width="4.52" height="119.95" fill="#8d94f6"/><rect x="1913.97" y="827.59" width="4.52" height="219.91" fill="#dde0fb"/><rect x="1913.97" y="667.66" width="4.52" height="159.93" fill="#b4b9f8"/><rect x="1913.97" y="567.70" width="4.52" height="99.96" fill="#8d94f6"/><rect x="1918.49" y="827.59" width="4.52" height="219.91" fill="#dde0fb"/><rect x="1918.49" y="727.63" width="4.52" height="99.96" fill="#b4b9f8"/><rect x="1918.49" y="567.70" width="4.52" height="159.93" fill="#8d94f6"/><rect x="1923.01" y="967.53" width="4.52" height="79.97" fill="#dde0fb"/><rect x="1923.01" y="687.65" width="4.52" height="279.88" fill="#b4b9f8"/><rect x="1923.01" y="567.70" width="4.52" height="119.95" fill="#8d94f6"/><rect x="1927.53" y="887.57" width="4.52" height="159.93" fill="#dde0fb"/><rect x="1927.53" y="667.66" width="4.52" height="219.91" fill="#b4b9f8"/><rect x="1927.53" y="567.70" width="4.52" height="99.96" fill="#8d94f6"/><rect x="1932.05" y="867.58" width="4.52" height="179.92" fill="#dde0fb"/><rect x="1932.05" y="707.64" width="4.52" height="159.93" fill="#b4b9f8"/><rect x="1932.05" y="567.70" width="4.52" height="139.94" fill="#8d94f6"/><rect x="1936.58" y="847.58" width="4.52" height="199.92" fill="#dde0fb"/><rect x="1936.58" y="687.65" width="4.52" height="159.93" fill="#b4b9f8"/><rect x="1936.58" y="567.70" width="4.52" height="119.95" fill="#8d94f6"/><rect x="1941.10" y="947.54" width="4.52" height="99.96" fill="#dde0fb"/><rect x="1941.10" y="727.63" width="4.52" height="219.91" fill="#b4b9f8"/><rect x="1941.10" y="567.70" width="4.52" height="159.93" fill="#8d94f6"/><rect x="1945.62" y="947.54" width="4.52" height="99.96" fill="#dde0fb"/><rect x="1945.62" y="727.63" width="4.52" height="219.91" fill="#b4b9f8"/><rect x="1945.62" y="567.70" width="4.52" height="159.93" fill="#8d94f6"/><rect x="1950.14" y="867.58" width="4.52" height="179.92" fill="#dde0fb"/><rect x="1950.14" y="707.64" width="4.52" height="159.93" fill="#b4b9f8"/><rect x="1950.14" y="567.70" width="4.52" height="139.94" fill="#8d94f6"/><rect x="1954.66" y="867.58" width="4.52" height="179.92" fill="#dde0fb"/><rect x="1954.66" y="627.67" width="4.52" height="239.90" fill="#b4b9f8"/><rect x="1954.66" y="567.70" width="4.52" height="59.97" fill="#8d94f6"/><rect x="1959.18" y="867.58" width="4.52" height="179.92" fill="#dde0fb"/><rect x="1959.18" y="747.62" width="4.52" height="119.95" fill="#b4b9f8"/><rect x="1959.18" y="567.70" width="4.52" height="179.92" fill="#8d94f6"/><rect x="1963.70" y="947.54" width="4.52" height="99.96" fill="#dde0fb"/><rect x="1963.70" y="727.63" width="4.52" height="219.91" fill="#b4b9f8"/><rect x="1963.70" y="567.70" width="4.52" height="159.93" fill="#8d94f6"/><rect x="1968.22" y="847.58" width="4.52" height="199.92" fill="#dde0fb"/><rect x="1968.22" y="667.66" width="4.52" height="179.93" fill="#b4b9f8"/><rect x="1968.22" y="567.70" width="4.52" height="99.96" fill="#8d94f6"/><rect x="1972.74" y="907.56" width="4.52" height="139.94" fill="#dde0fb"/><rect x="1972.74" y="707.64" width="4.52" height="199.92" fill="#b4b9f8"/><rect x="1972.74" y="567.70" width="4.52" height="139.94" fill="#8d94f6"/><rect x="1977.26" y="927.55" width="4.52" height="119.95" fill="#dde0fb"/><rect x="1977.26" y="747.62" width="4.52" height="179.92" fill="#b4b9f8"/><rect x="1977.26" y="567.70" width="4.52" height="179.92" fill="#8d94f6"/><rect x="1981.78" y="967.53" width="4.52" height="79.97" fill="#dde0fb"/><rect x="1981.78" y="687.65" width="4.52" height="279.88" fill="#b4b9f8"/><rect x="1981.78" y="567.70" width="4.52" height="119.95" fill="#8d94f6"/><rect x="1986.30" y="907.56" width="4.52" height="139.94" fill="#dde0fb"/><rect x="1986.30" y="667.66" width="4.52" height="239.90" fill="#b4b9f8"/><rect x="1986.30" y="567.70" width="4.52" height="99.96" fill="#8d94f6"/><rect x="1990.82" y="947.54" width="4.52" height="99.96" fill="#dde0fb"/><rect x="1990.82" y="787.61" width="4.52" height="159.93" fill="#b4b9f8"/><rect x="1990.82" y="567.70" width="4.52" height="219.91" fill="#8d94f6"/><rect x="1995.34" y="847.58" width="4.52" height="199.92" fill="#dde0fb"/><rect x="1995.34" y="667.66" width="4.52" height="179.93" fill="#b4b9f8"/><rect x="1995.34" y="567.70" width="4.52" height="99.96" fill="#8d94f6"/><rect x="1999.86" y="967.53" width="4.52" height="79.97" fill="#dde0fb"/><rect x="1999.86" y="767.62" width="4.52" height="199.92" fill="#b4b9f8"/><rect x="1999.86" y="567.70" width="4.52" height="199.92" fill="#8d94f6"/><rect x="2004.38" y="907.56" width="4.52" height="139.94" fill="#dde0fb"/><rect x="2004.38" y="747.62" width="4.52" height="159.93" fill="#b4b9f8"/><rect x="2004.38" y="567.70" width="4.52" height="179.92" fill="#8d94f6"/><rect x="2008.90" y="887.57" width="4.52" height="159.93" fill="#dde0fb"/><rect x="2008.90" y="687.65" width="4.52" height="199.92" fill="#b4b9f8"/><rect x="2008.90" y="567.70" width="4.52" height="119.95" fill="#8d94f6"/><rect x="2013.42" y="907.56" width="4.52" height="139.94" fill="#dde0fb"/><rect x="2013.42" y="647.67" width="4.52" height="259.89" fill="#b4b9f8"/><rect x="2013.42" y="567.70" width="4.52" height="79.97" fill="#8d94f6"/><rect x="2017.95" y="947.54" width="4.52" height="99.96" fill="#dde0fb"/><rect x="2017.95" y="767.62" width="4.52" height="179.92" fill="#b4b9f8"/><rect x="2017.95" y="567.70" width="4.52" height="199.92" fill="#8d94f6"/><rect x="2022.47" y="887.57" width="4.52" height="159.93" fill="#dde0fb"/><rect x="2022.47" y="667.66" width="4.52" height="219.91" fill="#b4b9f8"/><rect x="2022.47" y="567.70" width="4.52" height="99.96" fill="#8d94f6"/><rect x="2026.99" y="927.55" width="4.52" height="119.95" fill="#dde0fb"/><rect x="2026.99" y="747.62" width="4.52" height="179.92" fill="#b4b9f8"/><rect x="2026.99" y="567.70" width="4.52" height="179.92" fill="#8d94f6"/><rect x="2031.51" y="827.59" width="4.52" height="219.91" fill="#dde0fb"/><rect x="2031.51" y="647.67" width="4.52" height="179.92" fill="#b4b9f8"/><rect x="2031.51" y="567.70" width="4.52" height="79.97" fill="#8d94f6"/><rect x="2036.03" y="927.55" width="4.52" height="119.95" fill="#dde0fb"/><rect x="2036.03" y="707.64" width="4.52" height="219.91" fill="#b4b9f8"/><rect x="2036.03" y="567.70" width="4.52" height="139.94" fill="#8d94f6"/><rect x="2040.55" y="927.55" width="4.52" height="119.95" fill="#dde0fb"/><rect x="2040.55" y="647.67" width="4.52" height="279.88" fill="#b4b9f8"/><rect x="2040.55" y="567.70" width="4.52" height="79.97" fill="#8d94f6"/><rect x="2045.07" y="927.55" width="4.52" height="119.95" fill="#dde0fb"/><rect x="2045.07" y="707.64" width="4.52" height="219.91" fill="#b4b9f8"/><rect x="2045.07" y="567.70" width="4.52" height="139.94" fill="#8d94f6"/><rect x="2049.59" y="967.53" width="4.52" height="79.97" fill="#dde0fb"/><rect x="2049.59" y="707.64" width="4.52" height="259.89" fill="#b4b9f8"/><rect x="2049.59" y="567.70" width="4.52" height="139.94" fill="#8d94f6"/><rect x="2054.71" y="567.70" width="3.32" height="481.80" fill="#b4b9f8" stroke="none"/><rect x="2054.71" y="564.70" width="3.32" height="3" fill="#8d94f6" stroke="none"/><rect x="2058.63" y="1007.52" width="4.52" height="39.98" fill="#dde0fb"/><rect x="2058.63" y="607.68" width="4.52" height="399.83" fill="#b4b9f8"/><rect x="2058.63" y="567.70" width="4.52" height="39.98" fill="#8d94f6"/><rect x="2063.15" y="827.59" width="4.52" height="219.91" fill="#dde0fb"/><rect x="2063.15" y="647.67" width="4.52" height="179.92" fill="#b4b9f8"/><rect x="2063.15" y="567.70" width="4.52" height="79.97" fill="#8d94f6"/><rect x="2067.67" y="887.57" width="4.52" height="159.93" fill="#dde0fb"/><rect x="2067.67" y="667.66" width="4.52" height="219.91" fill="#b4b9f8"/><rect x="2067.67" y="567.70" width="4.52" height="99.96" fill="#8d94f6"/><rect x="2072.19" y="887.57" width="4.52" height="159.93" fill="#dde0fb"/><rect x="2072.19" y="767.62" width="4.52" height="119.95" fill="#b4b9f8"/><rect x="2072.19" y="567.70" width="4.52" height="199.92" fill="#8d94f6"/><rect x="2076.71" y="887.57" width="4.52" height="159.93" fill="#dde0fb"/><rect x="2076.71" y="687.65" width="4.52" height="199.92" fill="#b4b9f8"/><rect x="2076.71" y="567.70" width="4.52" height="119.95" fill="#8d94f6"/><rect x="2081.23" y="887.57" width="4.52" height="159.93" fill="#dde0fb"/><rect x="2081.23" y="647.67" width="4.52" height="239.90" fill="#b4b9f8"/><rect x="2081.23" y="567.70" width="4.52" height="79.97" fill="#8d94f6"/><rect x="2085.75" y="967.53" width="4.52" height="79.97" fill="#dde0fb"/><rect x="2085.75" y="787.61" width="4.52" height="179.92" fill="#b4b9f8"/><rect x="2085.75" y="567.70" width="4.52" height="219.91" fill="#8d94f6"/><rect x="2090.27" y="867.58" width="4.52" height="179.92" fill="#dde0fb"/><rect x="2090.27" y="667.66" width="4.52" height="199.92" fill="#b4b9f8"/><rect x="2090.27" y="567.70" width="4.52" height="99.96" fill="#8d94f6"/><rect x="2094.79" y="867.58" width="4.52" height="179.92" fill="#dde0fb"/><rect x="2094.79" y="687.65" width="4.52" height="179.92" fill="#b4b9f8"/><rect x="2094.79" y="567.70" width="4.52" height="119.95" fill="#8d94f6"/><rect x="2099.32" y="927.55" width="4.52" height="119.95" fill="#dde0fb"/><rect x="2099.32" y="747.62" width="4.52" height="179.92" fill="#b4b9f8"/><rect x="2099.32" y="567.70" width="4.52" height="179.92" fill="#8d94f6"/><rect x="2103.84" y="907.56" width="4.52" height="139.94" fill="#dde0fb"/><rect x="2103.84" y="707.64" width="4.52" height="199.92" fill="#b4b9f8"/><rect x="2103.84" y="567.70" width="4.52" height="139.94" fill="#8d94f6"/><rect x="2108.36" y="907.56" width="4.52" height="139.94" fill="#dde0fb"/><rect x="2108.36" y="727.63" width="4.52" height="179.92" fill="#b4b9f8"/><rect x="2108.36" y="567.70" width="4.52" height="159.93" fill="#8d94f6"/><rect x="2112.88" y="887.57" width="4.52" height="159.93" fill="#dde0fb"/><rect x="2112.88" y="687.65" width="4.52" height="199.92" fill="#b4b9f8"/><rect x="2112.88" y="567.70" width="4.52" height="119.95" fill="#8d94f6"/><rect x="2117.40" y="927.55" width="4.52" height="119.95" fill="#dde0fb"/><rect x="2117.40" y="727.63" width="4.52" height="199.92" fill="#b4b9f8"/><rect x="2117.40" y="567.70" width="4.52" height="159.93" fill="#8d94f6"/><rect x="2121.92" y="907.56" width="4.52" height="139.94" fill="#dde0fb"/><rect x="2121.92" y="747.62" width="4.52" height="159.93" fill="#b4b9f8"/><rect x="2121.92" y="567.70" width="4.52" height="179.92" fill="#8d94f6"/><rect x="2126.44" y="927.55" width="4.52" height="119.95" fill="#dde0fb"/><rect x="2126.44" y="787.61" width="4.52" height="139.94" fill="#b4b9f8"/><rect x="2126.44" y="567.70" width="4.52" height="219.91" fill="#8d94f6"/><rect x="2130.96" y="567.70" width="4.52" height="479.80" fill="#8d94f6"/><rect x="2135.48" y="567.70" width="4.52" height="479.80" fill="#8d94f6"/><rect x="2140.00" y="567.70" width="4.52" height="479.80" fill="#8d94f6"/><rect x="2144.52" y="567.70" width="4.52" height="479.80" fill="#8d94f6"/><rect x="2149.04" y="567.70" width="4.52" height="479.80" fill="#8d94f6"/><rect x="2153.56" y="567.70" width="4.52" height="479.80" fill="#8d94f6"/><rect x="2158.08" y="567.70" width="4.52" height="479.80" fill="#8d94f6"/><rect x="2162.60" y="567.70" width="4.52" height="479.80" fill="#8d94f6"/><rect x="2167.12" y="567.70" width="4.52" height="479.80" fill="#8d94f6"/><rect x="2171.64" y="567.70" width="4.52" height="479.80" fill="#8d94f6"/><rect x="2176.16" y="567.70" width="4.52" height="479.80" fill="#8d94f6"/><rect x="2180.68" y="567.70" width="4.52" height="479.80" fill="#8d94f6"/><rect x="2185.21" y="567.70" width="4.52" height="479.80" fill="#8d94f6"/><rect x="2189.73" y="567.70" width="4.52" height="479.80" fill="#8d94f6"/><rect x="2194.25" y="567.70" width="4.52" height="479.80" fill="#8d94f6"/><rect x="2198.77" y="567.70" width="4.52" height="479.80" fill="#8d94f6"/><rect x="2203.29" y="567.70" width="4.52" height="479.80" fill="#8d94f6"/><rect x="2207.81" y="567.70" width="4.52" height="479.80" fill="#8d94f6"/><rect x="2212.33" y="567.70" width="4.52" height="479.80" fill="#8d94f6"/><rect x="2216.85" y="567.70" width="4.52" height="479.80" fill="#8d94f6"/><rect x="2221.37" y="567.70" width="4.52" height="479.80" fill="#8d94f6"/><rect x="2225.89" y="567.70" width="4.52" height="479.80" fill="#8d94f6"/><rect x="2230.41" y="567.70" width="4.52" height="479.80" fill="#8d94f6"/><rect x="2234.93" y="567.70" width="4.52" height="479.80" fill="#8d94f6"/><rect x="2239.45" y="567.70" width="4.52" height="479.80" fill="#8d94f6"/><rect x="2243.97" y="567.70" width="4.52" height="479.80" fill="#8d94f6"/><rect x="2248.49" y="567.70" width="4.52" height="479.80" fill="#8d94f6"/><rect x="2253.01" y="567.70" width="4.52" height="479.80" fill="#8d94f6"/><rect x="2257.53" y="567.70" width="4.52" height="479.80" fill="#8d94f6"/><rect x="2262.05" y="567.70" width="4.52" height="479.80" fill="#8d94f6"/><rect x="2266.58" y="567.70" width="4.52" height="479.80" fill="#8d94f6"/><rect x="2271.10" y="567.70" width="4.52" height="479.80" fill="#8d94f6"/><rect x="2275.62" y="567.70" width="4.52" height="479.80" fill="#8d94f6"/><rect x="2280.14" y="567.70" width="4.52" height="479.80" fill="#8d94f6"/><rect x="2284.66" y="567.70" width="4.52" height="479.80" fill="#8d94f6"/><rect x="2289.18" y="567.70" width="4.52" height="479.80" fill="#8d94f6"/><rect x="2293.70" y="567.70" width="4.52" height="479.80" fill="#8d94f6"/><rect x="2298.22" y="567.70" width="4.52" height="479.80" fill="#8d94f6"/><rect x="2302.74" y="567.70" width="4.52" height="479.80" fill="#8d94f6"/><rect x="2307.26" y="567.70" width="4.52" height="479.80" fill="#8d94f6"/><rect x="2311.78" y="567.70" width="4.52" height="479.80" fill="#8d94f6"/><rect x="2316.30" y="567.70" width="4.52" height="479.80" fill="#8d94f6"/><rect x="2320.82" y="567.70" width="4.52" height="479.80" fill="#8d94f6"/><rect x="2325.34" y="567.70" width="4.52" height="479.80" fill="#8d94f6"/><rect x="2329.86" y="567.70" width="4.52" height="479.80" fill="#8d94f6"/><rect x="2334.38" y="567.70" width="4.52" height="479.80" fill="#8d94f6"/><rect x="2338.90" y="567.70" width="4.52" height="479.80" fill="#8d94f6"/><rect x="2343.42" y="567.70" width="4.52" height="479.80" fill="#8d94f6"/><rect x="2347.95" y="567.70" width="4.52" height="479.80" fill="#8d94f6"/><rect x="2352.47" y="567.70" width="4.52" height="479.80" fill="#8d94f6"/><rect x="2356.99" y="567.70" width="4.52" height="479.80" fill="#8d94f6"/><rect x="2361.51" y="567.70" width="4.52" height="479.80" fill="#8d94f6"/><rect x="2366.03" y="567.70" width="4.52" height="479.80" fill="#8d94f6"/><rect x="2370.55" y="567.70" width="4.52" height="479.80" fill="#8d94f6"/><rect x="2375.07" y="567.70" width="4.52" height="479.80" fill="#8d94f6"/><rect x="2379.59" y="567.70" width="4.52" height="479.80" fill="#8d94f6"/><rect x="2384.11" y="567.70" width="4.52" height="479.80" fill="#8d94f6"/><rect x="2388.63" y="567.70" width="4.52" height="479.80" fill="#8d94f6"/><rect x="2393.15" y="567.70" width="4.52" height="479.80" fill="#8d94f6"/><rect x="2397.67" y="567.70" width="4.52" height="479.80" fill="#8d94f6"/><rect x="2402.19" y="567.70" width="4.52" height="479.80" fill="#8d94f6"/><rect x="2406.71" y="567.70" width="4.52" height="479.80" fill="#8d94f6"/><rect x="2411.23" y="567.70" width="4.52" height="479.80" fill="#8d94f6"/><rect x="2415.75" y="567.70" width="4.52" height="479.80" fill="#8d94f6"/><rect x="2420.27" y="567.70" width="4.52" height="479.80" fill="#8d94f6"/><rect x="2424.79" y="567.70" width="4.52" height="479.80" fill="#8d94f6"/><rect x="2429.32" y="567.70" width="4.52" height="479.80" fill="#8d94f6"/><rect x="2433.84" y="567.70" width="4.52" height="479.80" fill="#8d94f6"/><rect x="2438.36" y="567.70" width="4.52" height="479.80" fill="#8d94f6"/><rect x="2442.88" y="567.70" width="4.52" height="479.80" fill="#8d94f6"/><rect x="2447.40" y="567.70" width="4.52" height="479.80" fill="#8d94f6"/><rect x="2451.92" y="567.70" width="4.52" height="479.80" fill="#8d94f6"/><rect x="2456.44" y="567.70" width="4.52" height="479.80" fill="#8d94f6"/><rect x="2460.96" y="567.70" width="4.52" height="479.80" fill="#8d94f6"/><rect x="2465.48" y="567.70" width="4.52" height="479.80" fill="#8d94f6"/></g><line x1="820.0" y1="951.5" x2="2470.0" y2="951.5" stroke="#d0d3f0" stroke-opacity="0.35" stroke-width="1.5"/><line x1="820.0" y1="855.6" x2="2470.0" y2="855.6" stroke="#d0d3f0" stroke-opacity="0.35" stroke-width="1.5"/><line x1="820.0" y1="759.6" x2="2470.0" y2="759.6" stroke="#d0d3f0" stroke-opacity="0.35" stroke-width="1.5"/><line x1="820.0" y1="663.7" x2="2470.0" y2="663.7" stroke="#d0d3f0" stroke-opacity="0.35" stroke-width="1.5"/><line x1="820.0" y1="1049.5" x2="2470.0" y2="1049.5" stroke="#e1e4ee" stroke-width="2"/><text x="822.3" y="1078" text-anchor="middle" font-size="21" fill="#4a4b59">2025-01-01</text><text x="962.4" y="1078" text-anchor="middle" font-size="21" fill="#4a4b59">2025-02-01</text><text x="1102.5" y="1078" text-anchor="middle" font-size="21" fill="#4a4b59">2025-03-04</text><text x="1242.7" y="1078" text-anchor="middle" font-size="21" fill="#4a4b59">2025-04-04</text><text x="1382.8" y="1078" text-anchor="middle" font-size="21" fill="#4a4b59">2025-05-05</text><text x="1522.9" y="1078" text-anchor="middle" font-size="21" fill="#4a4b59">2025-06-05</text><text x="1663.1" y="1078" text-anchor="middle" font-size="21" fill="#4a4b59">2025-07-06</text><text x="1803.2" y="1078" text-anchor="middle" font-size="21" fill="#4a4b59">2025-08-06</text><text x="1943.4" y="1078" text-anchor="middle" font-size="21" fill="#4a4b59">2025-09-06</text><text x="2083.5" y="1078" text-anchor="middle" font-size="21" fill="#4a4b59">2025-10-07</text><text x="2223.6" y="1078" text-anchor="middle" font-size="21" fill="#4a4b59">2025-11-07</text><text x="2363.8" y="1078" text-anchor="middle" font-size="21" fill="#4a4b59">2025-12-08</text></svg>
<!-- AUTOSCALE -->
<div class="a" style="left:699px;top:1110px;width:31px;height:31px;border:3px solid #8e8f9a;border-radius:3px"></div>
<div class="t" style="left:748px;top:1113px;font-size:26.5px;letter-spacing:1.2px">Autoscale</div>
<div class="t" style="left:672px;top:1206px;font-size:39.5px;letter-spacing:0.2px">Range Summary</div>
<div class="t" style="left:672px;top:1264px;font-size:26px;letter-spacing:1.2px">Overall distribution across all defined ranges</div>
<div class="a" style="left:672px;top:1322px;width:1826px;height:25px;background:#f6f6fc;border:1px solid #efeff3"></div>
<!-- DROPDOWN -->
<div class="a" style="left:1268px;top:506px;width:385px;height:170px;background:#fff;border-radius:0 0 8px 8px;box-shadow:0 3px 6px rgba(0,0,0,0.18);overflow:hidden">
<div class="a" style="left:0;top:85px;width:385px;height:85px;background:#f7f7fd"></div>
</div>
<div class="t" style="left:1298px;top:538px;font-size:24.5px;letter-spacing:0.95px">Duration</div>
<div class="t" style="left:1298px;top:622px;font-size:24.5px;letter-spacing:0.65px">Duration_percent</div>
<!-- COLLAPSE BTN -->
<div class="a" style="left:60px;top:175px;width:53px;height:53px;border-radius:50%;background:#fff;border:1.5px solid #ececef"></div>
<svg style="left:74px;top:186px" width="24" height="30" viewBox="0 0 24 30"><path d="M7 3 L18 15 L7 27" fill="none" stroke="#4a4b59" stroke-width="2.8" stroke-linecap="round" stroke-linejoin="round"/></svg>
</body></html>
